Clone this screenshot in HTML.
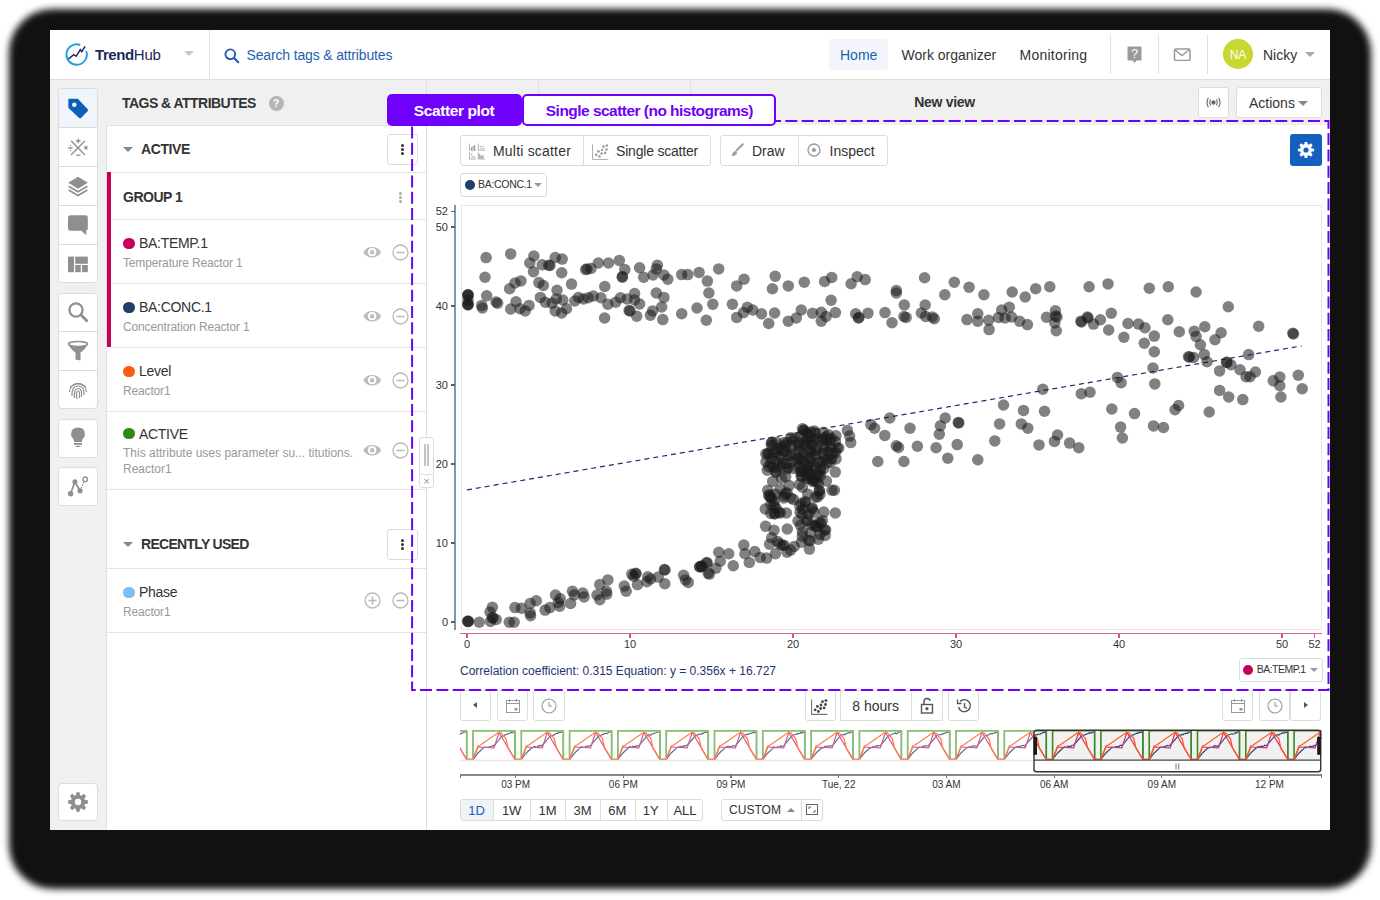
<!DOCTYPE html>
<html><head><meta charset="utf-8">
<style>
*{box-sizing:border-box;margin:0;padding:0}
html,body{width:1380px;height:900px;overflow:hidden;background:#fff;font-family:"Liberation Sans",sans-serif;color:#333}
.abs{position:absolute}
#shadow{position:absolute;left:9px;top:9px;width:1362px;height:880px;border-radius:44px;background:#111;filter:blur(3.5px)}
#win{position:absolute;left:50px;top:30px;width:1280px;height:800px;background:#fff;overflow:hidden}
.t{position:absolute;white-space:nowrap;line-height:1}
.btn{position:absolute;border:1px solid #dcdcdc;border-radius:3px;background:#fff}
.sb{position:absolute;left:8px;width:40px;border:1px solid #dcdcdc;border-radius:3px;background:#fff}
.sbi{position:absolute;left:0;width:38px;height:39px;border-bottom:1px solid #dcdcdc}
.sbi:last-child{border-bottom:none}
.row{position:absolute;left:56px;width:320px;border-bottom:1px solid #e3e3e3;background:#fff}
.dot{position:absolute;width:11px;height:11px;border-radius:50%}
.ttl{position:absolute;font-size:14.5px;color:#333;white-space:nowrap;line-height:1}
.sub{position:absolute;font-size:12px;color:#999;white-space:nowrap;line-height:1}
</style></head><body>
<div id="shadow"></div>
<div id="win">
<div class="abs" style="left:0;top:0;width:1280px;height:50px;background:#fff;border-bottom:1px solid #dedede"></div>
<svg class="abs" style="left:15px;top:13px" width="23" height="23" viewBox="0 0 23 23">
<path d="M21.2 8 A10.2 10.2 0 1 1 15.2 2" fill="none" stroke="#22a0dc" stroke-width="1.9"/>
<path d="M3.6 15.8 L8.7 11.7 L11.2 13.3 L15.3 6.7 L16.8 8.7 L20 3.4" fill="none" stroke="#1d2a5c" stroke-width="1.5" stroke-linejoin="miter"/></svg>
<div class="t" style="left:45px;top:16.5px;font-size:15px;color:#1d2858;font-weight:normal;height:15px;line-height:15px;"><b style="letter-spacing:-0.4px">Trend</b><span style="letter-spacing:-0.3px">Hub</span></div>
<div class="abs" style="left:134px;top:21px;width:0;height:0;border-left:5px solid transparent;border-right:5px solid transparent;border-top:5px solid #c8c8c8"></div>
<div class="abs" style="left:159px;top:0;width:1px;height:50px;background:#e3e3e3"></div>
<svg class="abs" style="left:174px;top:18px" width="16" height="16" viewBox="0 0 16 16">
<circle cx="6.3" cy="6.3" r="4.9" fill="none" stroke="#1f5fae" stroke-width="1.9"/>
<path d="M9.8 9.8 L14.3 14.3" stroke="#1f5fae" stroke-width="2.2" stroke-linecap="round"/></svg>
<div class="t" style="left:196.5px;top:18.0px;font-size:14px;color:#1f5fae;font-weight:normal;height:14px;line-height:14px;letter-spacing:-0.15px">Search tags &amp; attributes</div>
<div class="abs" style="left:779px;top:9px;width:59px;height:31px;background:#f2f6fb;border-radius:3px"></div>
<div class="t" style="left:790px;top:17.5px;font-size:14px;color:#1f5fae;font-weight:normal;height:14px;line-height:14px;">Home</div>
<div class="t" style="left:851.5px;top:17.5px;font-size:14px;color:#333;font-weight:normal;height:14px;line-height:14px;">Work organizer</div>
<div class="t" style="left:969.5px;top:17.5px;font-size:14px;color:#333;font-weight:normal;height:14px;line-height:14px;letter-spacing:0.25px">Monitoring</div>
<div class="abs" style="left:1060px;top:5px;width:1px;height:39px;background:#e0e0e0"></div>
<div class="abs" style="left:1108px;top:5px;width:1px;height:39px;background:#e0e0e0"></div>
<div class="abs" style="left:1157px;top:5px;width:1px;height:39px;background:#e0e0e0"></div>
<svg class="abs" style="left:1077px;top:16px" width="15" height="18" viewBox="0 0 15 18">
<path d="M1.5 0.5 H13.5 Q14.5 0.5 14.5 1.5 V13.5 Q14.5 14.5 13.5 14.5 H9.5 L7.5 17 L5.5 14.5 H1.5 Q0.5 14.5 0.5 13.5 V1.5 Q0.5 0.5 1.5 0.5Z" fill="#9a9a9a"/>
<text x="7.5" y="12" font-family="Liberation Sans" font-size="13" fill="#fff" text-anchor="middle">?</text></svg>
<svg class="abs" style="left:1123px;top:18px" width="18" height="13" viewBox="0 0 18 13">
<rect x="1.5" y="1" width="15.5" height="11.5" rx="1.5" fill="none" stroke="#9a9a9a" stroke-width="1.5"/>
<path d="M1.5 1.5 L9 7.5 L16.5 1.5" fill="none" stroke="#9a9a9a" stroke-width="1.5"/></svg>
<div class="abs" style="left:1172.8px;top:9.1px;width:30.4px;height:30.4px;border-radius:50%;background:#c9d731"></div>
<div class="t" style="left:1188px;top:18.5px;font-size:12px;color:#fff;font-weight:normal;height:12px;line-height:12px;transform:translateX(-50%);">NA</div>
<div class="t" style="left:1213px;top:17.5px;font-size:14px;color:#333;font-weight:normal;height:14px;line-height:14px;">Nicky</div>
<div class="abs" style="left:1255px;top:22px;width:0;height:0;border-left:5px solid transparent;border-right:5px solid transparent;border-top:5px solid #aaa"></div>
<div class="abs" style="left:0;top:50px;width:57px;height:750px;background:#f0f0f0"></div>
<div class="abs" style="left:8px;top:58px;width:40px;height:195.0px;border:1px solid #dcdcdc;border-radius:4px;background:#fff;overflow:hidden">
<div class="abs" style="left:0;top:38.0px;width:38px;height:1px;background:#dcdcdc"></div>
<div class="abs" style="left:0;top:77.0px;width:38px;height:1px;background:#dcdcdc"></div>
<div class="abs" style="left:0;top:116.0px;width:38px;height:1px;background:#dcdcdc"></div>
<div class="abs" style="left:0;top:155.0px;width:38px;height:1px;background:#dcdcdc"></div>
</div>
<div class="abs" style="left:9px;top:59px;width:38px;height:38px;background:#f0f5fb;border-radius:3px 3px 0 0"></div>
<div class="abs" style="left:8px;top:262.5px;width:40px;height:116.5px;border:1px solid #dcdcdc;border-radius:4px;background:#fff;overflow:hidden">
<div class="abs" style="left:0;top:37.8px;width:38px;height:1px;background:#dcdcdc"></div>
<div class="abs" style="left:0;top:76.7px;width:38px;height:1px;background:#dcdcdc"></div>
</div>
<div class="abs" style="left:8px;top:388.5px;width:40px;height:39.0px;border:1px solid #dcdcdc;border-radius:4px;background:#fff;overflow:hidden">
</div>
<div class="abs" style="left:8px;top:436.5px;width:40px;height:39.0px;border:1px solid #dcdcdc;border-radius:4px;background:#fff;overflow:hidden">
</div>
<div class="abs" style="left:8px;top:752.5px;width:40px;height:38.5px;border:1px solid #dcdcdc;border-radius:4px;background:#fff;overflow:hidden">
</div>
<svg class="abs" style="left:17px;top:67px" width="22" height="22" viewBox="0 0 22 22">
<path d="M2 2.3 H10.4 L20.2 12.6 Q20.6 13.2 20.1 13.8 L13.8 20.2 Q13 20.9 12.3 20.2 L2 10.6 Z" fill="#0b5fb9" stroke="#0b5fb9" stroke-width="1.3" stroke-linejoin="round"/>
<circle cx="7.3" cy="7.7" r="2.3" fill="#f0f5fb"/></svg>
<svg class="abs" style="left:17px;top:107px" width="22" height="22" viewBox="0 0 22 22">
<path d="M4.5 4.3 L17.5 17.5 M17.5 4.3 L4.5 17.5" stroke="#8f8f8f" stroke-width="1.35" stroke-linecap="round"/>
<path d="M9.1 4 H13.5 M11.3 1.8 V6.2 M1.2 11 H5.6 M17.4 9.3 L20.4 12.3 M20.4 9.3 L17.4 12.3 M9.1 18.2 H13.5" stroke="#8f8f8f" stroke-width="1.3"/>
<circle cx="3.4" cy="8.6" r="0.7" fill="#8f8f8f"/><circle cx="3.4" cy="13.4" r="0.7" fill="#8f8f8f"/></svg>
<svg class="abs" style="left:17px;top:146px" width="22" height="22" viewBox="0 0 22 22">
<path d="M11 0.8 L20.8 6.8 L11 12.8 L1.2 6.8 Z" fill="#8f8f8f"/>
<path d="M1.6 10.2 L11 15.8 L20.4 10.2 M1.6 14 L11 19.6 L20.4 14" fill="none" stroke="#8f8f8f" stroke-width="1.7"/></svg>
<svg class="abs" style="left:17px;top:185px" width="22" height="22" viewBox="0 0 22 22">
<path d="M1 2.6 Q1 0.2 3.4 0.2 H18.4 Q20.8 0.2 20.8 2.6 V13.4 Q20.8 15.8 18.6 15.8 H19.3 V20.2 L14.3 15.8 H3.4 Q1 15.8 1 13.4 Z" fill="#8f8f8f"/></svg>
<svg class="abs" style="left:17px;top:224px" width="22" height="22" viewBox="0 0 22 22">
<rect x="1" y="2.6" width="6" height="15.6" fill="#8f8f8f"/><rect x="8.2" y="2.6" width="12.6" height="7.2" fill="#8f8f8f"/>
<rect x="8.2" y="11" width="5.6" height="7.2" fill="#8f8f8f"/><rect x="15" y="11" width="5.8" height="7.2" fill="#8f8f8f"/></svg>
<svg class="abs" style="left:17px;top:271px" width="22" height="22" viewBox="0 0 22 22">
<circle cx="9" cy="9" r="6.6" fill="none" stroke="#8f8f8f" stroke-width="2.2"/>
<path d="M13.8 13.8 L19.8 19.8" stroke="#8f8f8f" stroke-width="2.8" stroke-linecap="round"/></svg>
<svg class="abs" style="left:17px;top:310px" width="22" height="22" viewBox="0 0 22 22">
<ellipse cx="11" cy="4" rx="9.5" ry="2.5" fill="none" stroke="#8f8f8f" stroke-width="1.6"/>
<path d="M1.5 4.5 Q4 10 8.5 12.5 V19.5 L13.5 20.5 V12.5 Q18 10 20.5 4.5 Q11 9 1.5 4.5Z" fill="#8f8f8f"/></svg>
<svg class="abs" style="left:17px;top:349px" width="22" height="22" viewBox="0 0 22 22" fill="none" stroke="#8f8f8f" stroke-width="1.2">
<path d="M3.5 8 Q11 1 18.5 8"/><path d="M2.5 13 Q3 5 11 4.5 Q19 5 19.5 13"/>
<path d="M5 17 Q4.5 7 11 7 Q17 7 17 14 V16"/><path d="M7.5 19 Q6.5 9.5 11 9.5 Q14.5 9.5 14.5 14 V18"/>
<path d="M10 20 Q8.5 12 11 12 Q12.5 12 12.5 15 V19"/></svg>
<svg class="abs" style="left:17px;top:396px" width="22" height="22" viewBox="0 0 22 22">
<path d="M11 1.5 Q18 1.5 18 8.5 Q18 11.5 15 14 V16 H7 V14 Q4 11.5 4 8.5 Q4 1.5 11 1.5Z" fill="#8f8f8f"/>
<rect x="7" y="17" width="8" height="1.8" fill="#8f8f8f"/><path d="M8 19.8 H14 L12.5 21 H9.5Z" fill="#8f8f8f"/></svg>
<svg class="abs" style="left:17px;top:445px" width="22" height="22" viewBox="0 0 22 22">
<path d="M3.6 18.8 L7.9 6.8 L13 15.8" fill="none" stroke="#8f8f8f" stroke-width="1.8"/>
<path d="M13 15.8 L17.5 6" stroke="#8f8f8f" stroke-width="1.3" stroke-dasharray="1.4 1.4"/>
<circle cx="3.6" cy="18.8" r="2.7" fill="#8f8f8f"/><circle cx="7.9" cy="6.8" r="2.5" fill="#8f8f8f"/><circle cx="13" cy="15.8" r="2.6" fill="#8f8f8f"/>
<circle cx="18.2" cy="4.3" r="2.3" fill="#fff" stroke="#8f8f8f" stroke-width="1.3"/></svg>
<svg class="abs" style="left:17px;top:761px" width="22" height="22" viewBox="0 0 22 22"><path d="M17.93 9.03 L20.87 9.37 L20.87 12.63 L17.93 12.97 L17.29 14.51 L19.13 16.83 L16.83 19.13 L14.51 17.29 L12.97 17.93 L12.63 20.87 L9.37 20.87 L9.03 17.93 L7.49 17.29 L5.17 19.13 L2.87 16.83 L4.71 14.51 L4.07 12.97 L1.13 12.63 L1.13 9.37 L4.07 9.03 L4.71 7.49 L2.87 5.17 L5.17 2.87 L7.49 4.71 L9.03 4.07 L9.37 1.13 L12.63 1.13 L12.97 4.07 L14.51 4.71 L16.83 2.87 L19.13 5.17 L17.29 7.49Z" fill="#8f8f8f"/><circle cx="11" cy="11" r="3.2" fill="#fff"/></svg>
<div class="abs" style="left:57px;top:50px;width:1223px;height:45px;background:#f0f0f0"></div>
<div class="abs" style="left:376px;top:50px;width:1px;height:750px;background:#dedede"></div>
<div class="abs" style="left:488px;top:50px;width:1px;height:45px;background:#e2e2e2"></div>
<div class="abs" style="left:639.5px;top:50px;width:1px;height:45px;background:#e2e2e2"></div>
<div class="t" style="left:72px;top:65.5px;font-size:14px;color:#333;font-weight:bold;height:14px;line-height:14px;letter-spacing:-0.53px">TAGS &amp; ATTRIBUTES</div>
<div class="abs" style="left:218.5px;top:65.5px;width:15px;height:15px;border-radius:50%;background:#b5b5b5"></div>
<div class="t" style="left:226px;top:67.5px;font-size:11px;color:#fff;font-weight:bold;height:11px;line-height:11px;transform:translateX(-50%);">?</div>
<div class="t" style="left:894.5px;top:65.0px;font-size:14px;color:#333;font-weight:bold;height:14px;line-height:14px;transform:translateX(-50%);letter-spacing:-0.3px">New view</div>
<div class="btn" style="left:1148px;top:57px;width:31px;height:31px"></div>
<svg class="abs" style="left:1155px;top:66px" width="17" height="13" viewBox="0 0 17 13" fill="none" stroke="#666" stroke-width="1.1">
<circle cx="8.5" cy="6.5" r="1.6" fill="#666"/><path d="M5.6 3.6 Q4 6.5 5.6 9.4 M11.4 3.6 Q13 6.5 11.4 9.4 M3.4 1.8 Q0.6 6.5 3.4 11.2 M13.6 1.8 Q16.4 6.5 13.6 11.2"/></svg>
<div class="btn" style="left:1186px;top:57px;width:86px;height:31px"></div>
<div class="t" style="left:1199px;top:66.0px;font-size:14px;color:#333;font-weight:normal;height:14px;line-height:14px;">Actions</div>
<div class="abs" style="left:1248px;top:71px;width:0;height:0;border-left:5px solid transparent;border-right:5px solid transparent;border-top:5px solid #888"></div>
<div class="abs" style="left:57px;top:95px;width:319px;height:705px;background:#fff;border-top:1px solid #e3e3e3"></div>
<div class="abs" style="left:56px;top:95px;width:1px;height:705px;background:#e0e0e0"></div>
<div class="abs" style="left:72.5px;top:117.0px;width:0;height:0;border-left:5px solid transparent;border-right:5px solid transparent;border-top:5px solid #888"></div>
<div class="t" style="left:91px;top:112.0px;font-size:14px;color:#333;font-weight:bold;height:14px;line-height:14px;letter-spacing:-0.4px">ACTIVE</div>
<div class="btn" style="left:336.5px;top:103.5px;width:31px;height:31px"></div>
<div class="abs" style="left:350.5px;top:113.5px;width:3px;height:3px;border-radius:50%;background:#333"></div>
<div class="abs" style="left:350.5px;top:117.5px;width:3px;height:3px;border-radius:50%;background:#333"></div>
<div class="abs" style="left:350.5px;top:121.5px;width:3px;height:3px;border-radius:50%;background:#333"></div>
<div class="abs" style="left:57px;top:142px;width:319px;height:1px;background:#e3e3e3"></div>
<div class="abs" style="left:57px;top:142px;width:4px;height:175px;background:#c8005a"></div>
<div class="t" style="left:73px;top:160.0px;font-size:14px;color:#333;font-weight:bold;height:14px;line-height:14px;letter-spacing:-0.5px">GROUP 1</div>
<div class="abs" style="left:348.5px;top:161.5px;width:3px;height:3px;border-radius:50%;background:#aaa"></div>
<div class="abs" style="left:348.5px;top:165.5px;width:3px;height:3px;border-radius:50%;background:#aaa"></div>
<div class="abs" style="left:348.5px;top:169.5px;width:3px;height:3px;border-radius:50%;background:#aaa"></div>
<div class="abs" style="left:61px;top:189px;width:315px;height:1px;background:#e3e3e3"></div>
<div class="abs" style="left:73px;top:207.5px;width:11.6px;height:11.6px;border-radius:50%;background:#c8005a"></div>
<div class="t" style="left:89px;top:206.3px;font-size:14px;color:#333;font-weight:normal;height:14px;line-height:14px;letter-spacing:-0.3px">BA:TEMP.1</div>
<div class="t" style="left:73px;top:226.5px;font-size:12px;color:#999;font-weight:normal;height:12px;line-height:12px;letter-spacing:-0.15px">Temperature Reactor 1</div>
<svg class="abs" style="left:312.65000000000003px;top:216.0px" width="18.3" height="12.4" viewBox="0 0 18.3 12.4">
<path d="M0.2 6.2 C3.5 -0.8 14.8 -0.8 18.1 6.2 C14.8 13.2 3.5 13.2 0.2 6.2Z" fill="#bbbcbe"/><circle cx="9.15" cy="6.2" r="4.1" fill="#fff"/><circle cx="9.15" cy="6.2" r="2.2" fill="#bbbcbe"/></svg>
<svg class="abs" style="left:341.5px;top:213.7px" width="17" height="17" viewBox="0 0 17 17">
<circle cx="8.5" cy="8.5" r="7.5" fill="none" stroke="#b8b8b8" stroke-width="1.3"/><path d="M4.5 8.5 H12.5" stroke="#b8b8b8" stroke-width="1.5"/></svg>
<div class="abs" style="left:61px;top:253px;width:315px;height:1px;background:#e3e3e3"></div>
<div class="abs" style="left:73px;top:271.5px;width:11.6px;height:11.6px;border-radius:50%;background:#1f3f66"></div>
<div class="t" style="left:89px;top:270.3px;font-size:14px;color:#333;font-weight:normal;height:14px;line-height:14px;letter-spacing:-0.3px">BA:CONC.1</div>
<div class="t" style="left:73px;top:290.5px;font-size:12px;color:#999;font-weight:normal;height:12px;line-height:12px;letter-spacing:-0.15px">Concentration Reactor 1</div>
<svg class="abs" style="left:312.65000000000003px;top:280.0px" width="18.3" height="12.4" viewBox="0 0 18.3 12.4">
<path d="M0.2 6.2 C3.5 -0.8 14.8 -0.8 18.1 6.2 C14.8 13.2 3.5 13.2 0.2 6.2Z" fill="#bbbcbe"/><circle cx="9.15" cy="6.2" r="4.1" fill="#fff"/><circle cx="9.15" cy="6.2" r="2.2" fill="#bbbcbe"/></svg>
<svg class="abs" style="left:341.5px;top:277.7px" width="17" height="17" viewBox="0 0 17 17">
<circle cx="8.5" cy="8.5" r="7.5" fill="none" stroke="#b8b8b8" stroke-width="1.3"/><path d="M4.5 8.5 H12.5" stroke="#b8b8b8" stroke-width="1.5"/></svg>
<div class="abs" style="left:61px;top:317px;width:315px;height:1px;background:#e3e3e3"></div>
<div class="abs" style="left:73px;top:335.5px;width:11.6px;height:11.6px;border-radius:50%;background:#ff5a14"></div>
<div class="t" style="left:89px;top:334.3px;font-size:14px;color:#333;font-weight:normal;height:14px;line-height:14px;letter-spacing:-0.3px">Level</div>
<div class="t" style="left:73px;top:354.5px;font-size:12px;color:#999;font-weight:normal;height:12px;line-height:12px;letter-spacing:-0.15px">Reactor1</div>
<svg class="abs" style="left:312.65000000000003px;top:344.0px" width="18.3" height="12.4" viewBox="0 0 18.3 12.4">
<path d="M0.2 6.2 C3.5 -0.8 14.8 -0.8 18.1 6.2 C14.8 13.2 3.5 13.2 0.2 6.2Z" fill="#bbbcbe"/><circle cx="9.15" cy="6.2" r="4.1" fill="#fff"/><circle cx="9.15" cy="6.2" r="2.2" fill="#bbbcbe"/></svg>
<svg class="abs" style="left:341.5px;top:341.7px" width="17" height="17" viewBox="0 0 17 17">
<circle cx="8.5" cy="8.5" r="7.5" fill="none" stroke="#b8b8b8" stroke-width="1.3"/><path d="M4.5 8.5 H12.5" stroke="#b8b8b8" stroke-width="1.5"/></svg>
<div class="abs" style="left:57px;top:381px;width:319px;height:1px;background:#e3e3e3"></div>
<div class="abs" style="left:73px;top:397.7px;width:11.6px;height:11.6px;border-radius:50%;background:#2f8a14"></div>
<div class="t" style="left:89px;top:396.5px;font-size:14px;color:#333;font-weight:normal;height:14px;line-height:14px;letter-spacing:-0.3px">ACTIVE</div>
<div class="t" style="left:73px;top:416.7px;font-size:12px;color:#999;font-weight:normal;height:12px;line-height:12px;">This attribute uses parameter su... titutions.</div>
<div class="t" style="left:73px;top:432.7px;font-size:12px;color:#999;font-weight:normal;height:12px;line-height:12px;">Reactor1</div>
<svg class="abs" style="left:312.65000000000003px;top:413.8px" width="18.3" height="12.4" viewBox="0 0 18.3 12.4">
<path d="M0.2 6.2 C3.5 -0.8 14.8 -0.8 18.1 6.2 C14.8 13.2 3.5 13.2 0.2 6.2Z" fill="#bbbcbe"/><circle cx="9.15" cy="6.2" r="4.1" fill="#fff"/><circle cx="9.15" cy="6.2" r="2.2" fill="#bbbcbe"/></svg>
<svg class="abs" style="left:341.5px;top:411.5px" width="17" height="17" viewBox="0 0 17 17">
<circle cx="8.5" cy="8.5" r="7.5" fill="none" stroke="#b8b8b8" stroke-width="1.3"/><path d="M4.5 8.5 H12.5" stroke="#b8b8b8" stroke-width="1.5"/></svg>
<div class="abs" style="left:57px;top:458.5px;width:319px;height:1px;background:#e3e3e3"></div>
<div class="abs" style="left:73px;top:512.0px;width:0;height:0;border-left:5px solid transparent;border-right:5px solid transparent;border-top:5px solid #888"></div>
<div class="t" style="left:91px;top:507.0px;font-size:14px;color:#333;font-weight:bold;height:14px;line-height:14px;letter-spacing:-0.7px">RECENTLY USED</div>
<div class="btn" style="left:336.5px;top:499.0px;width:31px;height:31px"></div>
<div class="abs" style="left:350.5px;top:509.0px;width:3px;height:3px;border-radius:50%;background:#333"></div>
<div class="abs" style="left:350.5px;top:513.0px;width:3px;height:3px;border-radius:50%;background:#333"></div>
<div class="abs" style="left:350.5px;top:517.0px;width:3px;height:3px;border-radius:50%;background:#333"></div>
<div class="abs" style="left:57px;top:538px;width:319px;height:1px;background:#e3e3e3"></div>
<div class="abs" style="left:73px;top:556.5px;width:11.6px;height:11.6px;border-radius:50%;background:#7bbdf5"></div>
<div class="t" style="left:89px;top:555.3px;font-size:14px;color:#333;font-weight:normal;height:14px;line-height:14px;letter-spacing:-0.3px">Phase</div>
<div class="t" style="left:73px;top:575.5px;font-size:12px;color:#999;font-weight:normal;height:12px;line-height:12px;letter-spacing:-0.15px">Reactor1</div>
<svg class="abs" style="left:313.5px;top:561.9px" width="17" height="17" viewBox="0 0 17 17">
<circle cx="8.5" cy="8.5" r="7.5" fill="none" stroke="#b8b8b8" stroke-width="1.3"/><path d="M4.5 8.5 H12.5" stroke="#b8b8b8" stroke-width="1.5"/><path d="M8.5 4.5 V12.5" stroke="#b8b8b8" stroke-width="1.5"/></svg>
<svg class="abs" style="left:341.5px;top:561.9px" width="17" height="17" viewBox="0 0 17 17">
<circle cx="8.5" cy="8.5" r="7.5" fill="none" stroke="#b8b8b8" stroke-width="1.3"/><path d="M4.5 8.5 H12.5" stroke="#b8b8b8" stroke-width="1.5"/></svg>
<div class="abs" style="left:57px;top:602px;width:319px;height:1px;background:#e3e3e3"></div>
<div class="btn" style="left:368.6px;top:407.3px;width:15.4px;height:51.2px;border-radius:3px"></div><div class="abs" style="left:369px;top:443.5px;width:15px;height:1px;background:#e2e2e2"></div>
<div class="abs" style="left:374.3px;top:414px;width:1.5px;height:22px;background:#c4c4c4"></div><div class="abs" style="left:377.4px;top:414px;width:1.5px;height:22px;background:#c4c4c4"></div>
<div class="t" style="left:376.5px;top:446.0px;font-size:11px;color:#999;font-weight:normal;height:11px;line-height:11px;transform:translateX(-50%);">×</div>
<div class="btn" style="left:410px;top:104.5px;width:251px;height:31px"></div>
<div class="abs" style="left:533px;top:105px;width:1px;height:30px;background:#dcdcdc"></div>
<div class="btn" style="left:670px;top:104.5px;width:168px;height:31px"></div>
<div class="abs" style="left:748px;top:105px;width:1px;height:30px;background:#dcdcdc"></div>
<svg class="abs" style="left:419px;top:113px" width="16.5" height="16.5" viewBox="0 0 16 16" fill="none">
<path d="M0.5 0.5 V7 H7 M9 0.5 V7 H15.5 M0.5 9 V15.5 H7 M9 9 V15.5 H15.5" stroke="#aaa" stroke-width="0.9"/>
<path d="M2.5 6.5 V4 M4 6.5 V3 M5.5 6.5 V2 M10.5 15 V10.5 M12 15 V12.5 M13.5 15 V11.5" stroke="#999" stroke-width="1.1"/>
<g fill="#999"><rect x="10.5" y="3" width="1.2" height="1.2"/><rect x="13" y="2.5" width="1.2" height="1.2"/><rect x="11.5" y="4.8" width="1.2" height="1.2"/><rect x="13.8" y="4.6" width="1.2" height="1.2"/>
<rect x="2" y="10.5" width="1.2" height="1.2"/><rect x="2.5" y="13" width="1.2" height="1.2"/><rect x="4.5" y="12.8" width="1.2" height="1.2"/></g></svg>
<div class="t" style="left:443px;top:113.5px;font-size:14px;color:#333;font-weight:normal;height:14px;line-height:14px;letter-spacing:0.2px">Multi scatter</div>
<svg class="abs" style="left:541.5px;top:112.5px" width="18" height="18" viewBox="0 0 18 18">
<path d="M0.6 1.2 V16.4 H16.4" stroke="#aaa" stroke-width="1" fill="none"/>
<g fill="#a0a0a0"><circle cx="4.2" cy="11.8" r="1.35"/><circle cx="7.4" cy="13.5" r="1.35"/><circle cx="6.4" cy="8.4" r="1.35"/><circle cx="9.6" cy="10.5" r="1.35"/><circle cx="10" cy="7" r="1.35"/><circle cx="13.1" cy="9.9" r="1.35"/><circle cx="11.5" cy="3.7" r="1.35"/><circle cx="14.5" cy="6.5" r="1.35"/><circle cx="14.9" cy="2.6" r="1.35"/></g></svg>
<div class="t" style="left:566px;top:113.5px;font-size:14px;color:#333;font-weight:normal;height:14px;line-height:14px;letter-spacing:-0.2px">Single scatter</div>
<svg class="abs" style="left:680px;top:113px" width="14" height="14" viewBox="0 0 14 14">
<path d="M12.8 1.2 L6.5 7.5" stroke="#a0a0a0" stroke-width="2" stroke-linecap="round"/><path d="M5.8 8 Q3.2 8 2.5 10.5 Q2.2 12 1 12.8 Q4.8 13.3 6.3 11.5 Q7.3 10 6.8 9Z" fill="#a0a0a0"/></svg>
<div class="t" style="left:702px;top:113.5px;font-size:14px;color:#333;font-weight:normal;height:14px;line-height:14px;">Draw</div>
<svg class="abs" style="left:757px;top:113px" width="14" height="14" viewBox="0 0 14 14">
<circle cx="7" cy="7" r="6" fill="none" stroke="#9a9a9a" stroke-width="1.3"/><circle cx="7" cy="7" r="2" fill="#9a9a9a"/></svg>
<div class="t" style="left:779.5px;top:113.5px;font-size:14px;color:#333;font-weight:normal;height:14px;line-height:14px;">Inspect</div>
<div class="abs" style="left:1240px;top:104px;width:32px;height:32px;background:#1560bd;border-radius:3px"></div>
<svg class="abs" style="left:1247px;top:111px" width="18" height="18" viewBox="0 0 18 18"><path d="M14.68 7.39 L17.09 7.67 L17.09 10.33 L14.68 10.61 L14.15 11.87 L15.66 13.78 L13.78 15.66 L11.87 14.15 L10.61 14.68 L10.33 17.09 L7.67 17.09 L7.39 14.68 L6.13 14.15 L4.22 15.66 L2.34 13.78 L3.85 11.87 L3.32 10.61 L0.91 10.33 L0.91 7.67 L3.32 7.39 L3.85 6.13 L2.34 4.22 L4.22 2.34 L6.13 3.85 L7.39 3.32 L7.67 0.91 L10.33 0.91 L10.61 3.32 L11.87 3.85 L13.78 2.34 L15.66 4.22 L14.15 6.13Z" fill="#fff"/><circle cx="9" cy="9" r="2.6" fill="#1560bd"/></svg>
<div class="btn" style="left:410px;top:142.5px;width:87px;height:24px"></div>
<div class="abs" style="left:414.5px;top:149.5px;width:10px;height:10px;border-radius:50%;background:#1f3f66"></div>
<div class="t" style="left:428px;top:149.2px;font-size:10.5px;color:#333;font-weight:normal;height:10.5px;line-height:10.5px;letter-spacing:-0.3px">BA:CONC.1</div>
<div class="abs" style="left:484px;top:152.5px;width:0;height:0;border-left:4px solid transparent;border-right:4px solid transparent;border-top:4px solid #999"></div>
<div class="abs" style="left:410.5px;top:175px;width:861.5px;height:425px;border:1px solid #e6e6e6"></div>
<div class="abs" style="left:403.8px;top:175px;width:2px;height:424.5px;background:#7f95b0"></div>
<div class="abs" style="left:410px;top:602.8px;width:862px;height:1.7px;background:#e5649e"></div>
<div class="abs" style="left:401px;top:591.4px;width:3.5px;height:1.3px;background:#4a5f80"></div>
<div class="t" style="left:398px;top:586.5px;font-size:11px;color:#333;font-weight:normal;height:11px;line-height:11px;transform:translateX(-100%);">0</div>
<div class="abs" style="left:401px;top:512.4px;width:3.5px;height:1.3px;background:#4a5f80"></div>
<div class="t" style="left:398px;top:507.5px;font-size:11px;color:#333;font-weight:normal;height:11px;line-height:11px;transform:translateX(-100%);">10</div>
<div class="abs" style="left:401px;top:433.4px;width:3.5px;height:1.3px;background:#4a5f80"></div>
<div class="t" style="left:398px;top:428.5px;font-size:11px;color:#333;font-weight:normal;height:11px;line-height:11px;transform:translateX(-100%);">20</div>
<div class="abs" style="left:401px;top:354.4px;width:3.5px;height:1.3px;background:#4a5f80"></div>
<div class="t" style="left:398px;top:349.5px;font-size:11px;color:#333;font-weight:normal;height:11px;line-height:11px;transform:translateX(-100%);">30</div>
<div class="abs" style="left:401px;top:275.4px;width:3.5px;height:1.3px;background:#4a5f80"></div>
<div class="t" style="left:398px;top:270.5px;font-size:11px;color:#333;font-weight:normal;height:11px;line-height:11px;transform:translateX(-100%);">40</div>
<div class="abs" style="left:401px;top:196.4px;width:3.5px;height:1.3px;background:#4a5f80"></div>
<div class="t" style="left:398px;top:191.5px;font-size:11px;color:#333;font-weight:normal;height:11px;line-height:11px;transform:translateX(-100%);">50</div>
<div class="abs" style="left:401px;top:180.6px;width:3.5px;height:1.3px;background:#4a5f80"></div>
<div class="t" style="left:398px;top:175.7px;font-size:11px;color:#333;font-weight:normal;height:11px;line-height:11px;transform:translateX(-100%);">52</div>
<div class="abs" style="left:416.4px;top:604px;width:1.3px;height:3.5px;background:#e0508e"></div>
<div class="t" style="left:417.0px;top:609.3px;font-size:11px;color:#333;font-weight:normal;height:11px;line-height:11px;transform:translateX(-50%);">0</div>
<div class="abs" style="left:579.4px;top:604px;width:1.3px;height:3.5px;background:#e0508e"></div>
<div class="t" style="left:580.0px;top:609.3px;font-size:11px;color:#333;font-weight:normal;height:11px;line-height:11px;transform:translateX(-50%);">10</div>
<div class="abs" style="left:742.4px;top:604px;width:1.3px;height:3.5px;background:#e0508e"></div>
<div class="t" style="left:743.0px;top:609.3px;font-size:11px;color:#333;font-weight:normal;height:11px;line-height:11px;transform:translateX(-50%);">20</div>
<div class="abs" style="left:905.4px;top:604px;width:1.3px;height:3.5px;background:#e0508e"></div>
<div class="t" style="left:906.0px;top:609.3px;font-size:11px;color:#333;font-weight:normal;height:11px;line-height:11px;transform:translateX(-50%);">30</div>
<div class="abs" style="left:1068.4px;top:604px;width:1.3px;height:3.5px;background:#e0508e"></div>
<div class="t" style="left:1069.0px;top:609.3px;font-size:11px;color:#333;font-weight:normal;height:11px;line-height:11px;transform:translateX(-50%);">40</div>
<div class="abs" style="left:1231.4px;top:604px;width:1.3px;height:3.5px;background:#e0508e"></div>
<div class="t" style="left:1232.0px;top:609.3px;font-size:11px;color:#333;font-weight:normal;height:11px;line-height:11px;transform:translateX(-50%);">50</div>
<div class="abs" style="left:1264.0px;top:604px;width:1.3px;height:3.5px;background:#e0508e"></div>
<div class="t" style="left:1264.6px;top:609.3px;font-size:11px;color:#333;font-weight:normal;height:11px;line-height:11px;transform:translateX(-50%);">52</div>
<div class="t" style="left:410px;top:634.5px;font-size:12px;color:#1d3571;font-weight:normal;height:12px;line-height:12px;">Correlation coefficient: 0.315 Equation: y = 0.356x + 16.727</div>
<div class="btn" style="left:1188.5px;top:627.5px;width:84px;height:24px"></div>
<div class="abs" style="left:1192.8px;top:634.5px;width:10.3px;height:10.3px;border-radius:50%;background:#c8005a"></div>
<div class="t" style="left:1206.7px;top:634.2px;font-size:10.5px;color:#333;font-weight:normal;height:10.5px;line-height:10.5px;letter-spacing:-0.5px">BA:TEMP.1</div>
<div class="abs" style="left:1259.5px;top:637.5px;width:0;height:0;border-left:4px solid transparent;border-right:4px solid transparent;border-top:4px solid #999"></div>
<svg class="abs" style="left:0;top:0" width="1280" height="800" viewBox="0 0 1280 800"><path d="M417.0 459.9 L1251.6 315.9" stroke="#1b2f6e" stroke-width="1.2" stroke-dasharray="5 4"/><g fill="#1a1a1a" fill-opacity="0.55"><circle cx="418.0" cy="265.0" r="5.75"/><circle cx="418.0" cy="265.5" r="5.75"/><circle cx="418.0" cy="264.5" r="5.75"/><circle cx="418.0" cy="274.5" r="5.75"/><circle cx="418.0" cy="275.0" r="5.75"/><circle cx="418.0" cy="274.0" r="5.75"/><circle cx="418.0" cy="270.0" r="5.75"/><circle cx="436.1" cy="227.6" r="5.75"/><circle cx="435.0" cy="247.2" r="5.75"/><circle cx="436.7" cy="265.7" r="5.75"/><circle cx="431.7" cy="275.4" r="5.75"/><circle cx="432.4" cy="278.0" r="5.75"/><circle cx="446.0" cy="272.0" r="5.75"/><circle cx="447.6" cy="273.3" r="5.75"/><circle cx="460.7" cy="223.9" r="5.75"/><circle cx="459.6" cy="258.7" r="5.75"/><circle cx="465.0" cy="253.0" r="5.75"/><circle cx="470.9" cy="250.9" r="5.75"/><circle cx="466.0" cy="271.7" r="5.75"/><circle cx="460.7" cy="279.0" r="5.75"/><circle cx="470.0" cy="278.7" r="5.75"/><circle cx="475.2" cy="280.9" r="5.75"/><circle cx="479.0" cy="275.4" r="5.75"/><circle cx="483.9" cy="226.0" r="5.75"/><circle cx="479.8" cy="233.0" r="5.75"/><circle cx="483.5" cy="241.7" r="5.75"/><circle cx="488.9" cy="252.6" r="5.75"/><circle cx="493.3" cy="255.4" r="5.75"/><circle cx="492.2" cy="234.8" r="5.75"/><circle cx="498.7" cy="235.2" r="5.75"/><circle cx="500.0" cy="235.5" r="5.75"/><circle cx="505.2" cy="227.6" r="5.75"/><circle cx="512.2" cy="229.1" r="5.75"/><circle cx="511.7" cy="242.8" r="5.75"/><circle cx="521.5" cy="254.1" r="5.75"/><circle cx="507.0" cy="260.2" r="5.75"/><circle cx="490.4" cy="267.4" r="5.75"/><circle cx="495.4" cy="272.2" r="5.75"/><circle cx="502.0" cy="273.3" r="5.75"/><circle cx="506.3" cy="268.9" r="5.75"/><circle cx="512.8" cy="270.0" r="5.75"/><circle cx="505.2" cy="280.9" r="5.75"/><circle cx="511.7" cy="283.0" r="5.75"/><circle cx="516.5" cy="278.7" r="5.75"/><circle cx="524.8" cy="271.0" r="5.75"/><circle cx="528.5" cy="267.4" r="5.75"/><circle cx="533.5" cy="269.0" r="5.75"/><circle cx="538.3" cy="267.8" r="5.75"/><circle cx="543.3" cy="266.0" r="5.75"/><circle cx="535.7" cy="239.6" r="5.75"/><circle cx="537.0" cy="239.0" r="5.75"/><circle cx="541.0" cy="238.5" r="5.75"/><circle cx="548.3" cy="233.0" r="5.75"/><circle cx="558.5" cy="233.0" r="5.75"/><circle cx="569.3" cy="230.4" r="5.75"/><circle cx="574.8" cy="239.6" r="5.75"/><circle cx="572.2" cy="247.2" r="5.75"/><circle cx="572.5" cy="246.5" r="5.75"/><circle cx="554.8" cy="256.5" r="5.75"/><circle cx="550.9" cy="267.8" r="5.75"/><circle cx="557.8" cy="274.3" r="5.75"/><circle cx="565.7" cy="272.2" r="5.75"/><circle cx="570.4" cy="267.8" r="5.75"/><circle cx="577.0" cy="269.0" r="5.75"/><circle cx="584.6" cy="263.5" r="5.75"/><circle cx="584.6" cy="270.0" r="5.75"/><circle cx="589.6" cy="274.0" r="5.75"/><circle cx="579.1" cy="280.4" r="5.75"/><circle cx="580.0" cy="281.0" r="5.75"/><circle cx="586.7" cy="286.3" r="5.75"/><circle cx="554.6" cy="288.0" r="5.75"/><circle cx="589.6" cy="237.8" r="5.75"/><circle cx="593.7" cy="247.2" r="5.75"/><circle cx="603.0" cy="245.0" r="5.75"/><circle cx="607.4" cy="235.2" r="5.75"/><circle cx="606.3" cy="239.0" r="5.75"/><circle cx="613.9" cy="245.0" r="5.75"/><circle cx="617.8" cy="249.3" r="5.75"/><circle cx="606.3" cy="263.0" r="5.75"/><circle cx="613.9" cy="267.4" r="5.75"/><circle cx="611.7" cy="277.0" r="5.75"/><circle cx="602.6" cy="280.9" r="5.75"/><circle cx="600.4" cy="285.2" r="5.75"/><circle cx="612.8" cy="289.6" r="5.75"/><circle cx="631.7" cy="244.6" r="5.75"/><circle cx="637.8" cy="244.6" r="5.75"/><circle cx="649.1" cy="242.4" r="5.75"/><circle cx="657.4" cy="251.1" r="5.75"/><circle cx="658.9" cy="263.0" r="5.75"/><circle cx="662.8" cy="274.3" r="5.75"/><circle cx="647.0" cy="278.0" r="5.75"/><circle cx="631.7" cy="283.7" r="5.75"/><circle cx="656.3" cy="290.2" r="5.75"/><circle cx="668.7" cy="238.9" r="5.75"/><circle cx="682.4" cy="274.3" r="5.75"/><circle cx="686.7" cy="255.9" r="5.75"/><circle cx="686.7" cy="287.4" r="5.75"/><circle cx="694.1" cy="249.3" r="5.75"/><circle cx="693.5" cy="282.6" r="5.75"/><circle cx="697.4" cy="277.2" r="5.75"/><circle cx="702.8" cy="280.0" r="5.75"/><circle cx="711.5" cy="283.7" r="5.75"/><circle cx="718.7" cy="293.5" r="5.75"/><circle cx="724.6" cy="283.0" r="5.75"/><circle cx="725.2" cy="246.3" r="5.75"/><circle cx="722.4" cy="258.7" r="5.75"/><circle cx="738.3" cy="255.9" r="5.75"/><circle cx="738.3" cy="291.3" r="5.75"/><circle cx="746.3" cy="288.0" r="5.75"/><circle cx="751.3" cy="280.0" r="5.75"/><circle cx="754.3" cy="252.2" r="5.75"/><circle cx="762.6" cy="283.3" r="5.75"/><circle cx="771.3" cy="282.2" r="5.75"/><circle cx="771.3" cy="291.3" r="5.75"/><circle cx="776.1" cy="286.5" r="5.75"/><circle cx="785.4" cy="282.6" r="5.75"/><circle cx="774.6" cy="251.5" r="5.75"/><circle cx="781.7" cy="247.4" r="5.75"/><circle cx="781.1" cy="270.2" r="5.75"/><circle cx="801.1" cy="253.7" r="5.75"/><circle cx="807.2" cy="246.7" r="5.75"/><circle cx="815.2" cy="249.6" r="5.75"/><circle cx="805.7" cy="283.7" r="5.75"/><circle cx="808.3" cy="288.0" r="5.75"/><circle cx="809.0" cy="287.5" r="5.75"/><circle cx="818.0" cy="283.3" r="5.75"/><circle cx="846.3" cy="260.4" r="5.75"/><circle cx="846.3" cy="263.0" r="5.75"/><circle cx="835.0" cy="282.6" r="5.75"/><circle cx="842.0" cy="292.8" r="5.75"/><circle cx="854.3" cy="275.0" r="5.75"/><circle cx="853.9" cy="286.5" r="5.75"/><circle cx="856.1" cy="287.4" r="5.75"/><circle cx="874.6" cy="247.8" r="5.75"/><circle cx="875.2" cy="275.0" r="5.75"/><circle cx="871.3" cy="283.0" r="5.75"/><circle cx="875.7" cy="286.5" r="5.75"/><circle cx="882.2" cy="287.0" r="5.75"/><circle cx="884.3" cy="288.7" r="5.75"/><circle cx="894.8" cy="264.8" r="5.75"/><circle cx="904.3" cy="252.2" r="5.75"/><circle cx="919.1" cy="257.2" r="5.75"/><circle cx="933.9" cy="264.8" r="5.75"/><circle cx="917.0" cy="289.6" r="5.75"/><circle cx="927.8" cy="283.7" r="5.75"/><circle cx="927.8" cy="291.3" r="5.75"/><circle cx="938.7" cy="290.2" r="5.75"/><circle cx="939.1" cy="299.6" r="5.75"/><circle cx="948.5" cy="287.4" r="5.75"/><circle cx="951.7" cy="280.0" r="5.75"/><circle cx="955.0" cy="288.0" r="5.75"/><circle cx="959.3" cy="277.2" r="5.75"/><circle cx="961.5" cy="287.0" r="5.75"/><circle cx="962.2" cy="262.0" r="5.75"/><circle cx="969.6" cy="291.3" r="5.75"/><circle cx="975.2" cy="267.0" r="5.75"/><circle cx="977.4" cy="294.6" r="5.75"/><circle cx="985.7" cy="258.7" r="5.75"/><circle cx="999.8" cy="256.7" r="5.75"/><circle cx="1039.1" cy="256.7" r="5.75"/><circle cx="1058.0" cy="253.9" r="5.75"/><circle cx="1099.3" cy="258.3" r="5.75"/><circle cx="1118.3" cy="256.7" r="5.75"/><circle cx="1146.1" cy="262.0" r="5.75"/><circle cx="1178.3" cy="276.7" r="5.75"/><circle cx="1208.7" cy="296.3" r="5.75"/><circle cx="1242.8" cy="303.3" r="5.75"/><circle cx="1243.5" cy="304.0" r="5.75"/><circle cx="996.5" cy="287.2" r="5.75"/><circle cx="1005.4" cy="280.7" r="5.75"/><circle cx="1007.0" cy="287.0" r="5.75"/><circle cx="1005.5" cy="286.0" r="5.75"/><circle cx="1004.8" cy="293.0" r="5.75"/><circle cx="1006.3" cy="300.7" r="5.75"/><circle cx="1030.9" cy="291.3" r="5.75"/><circle cx="1031.5" cy="292.0" r="5.75"/><circle cx="1037.4" cy="287.0" r="5.75"/><circle cx="1038.0" cy="288.0" r="5.75"/><circle cx="1043.5" cy="294.1" r="5.75"/><circle cx="1050.4" cy="289.8" r="5.75"/><circle cx="1061.3" cy="283.3" r="5.75"/><circle cx="1058.7" cy="300.0" r="5.75"/><circle cx="1073.9" cy="307.2" r="5.75"/><circle cx="1078.0" cy="293.5" r="5.75"/><circle cx="1088.5" cy="294.1" r="5.75"/><circle cx="1095.0" cy="297.8" r="5.75"/><circle cx="1104.3" cy="306.1" r="5.75"/><circle cx="1094.3" cy="313.3" r="5.75"/><circle cx="1104.3" cy="321.7" r="5.75"/><circle cx="1117.8" cy="289.8" r="5.75"/><circle cx="1129.3" cy="301.7" r="5.75"/><circle cx="1144.3" cy="301.3" r="5.75"/><circle cx="1146.1" cy="306.5" r="5.75"/><circle cx="1154.8" cy="296.7" r="5.75"/><circle cx="1150.4" cy="314.8" r="5.75"/><circle cx="1171.1" cy="302.8" r="5.75"/><circle cx="1165.0" cy="309.8" r="5.75"/><circle cx="1138.5" cy="326.7" r="5.75"/><circle cx="1139.5" cy="327.0" r="5.75"/><circle cx="1143.5" cy="327.4" r="5.75"/><circle cx="1154.3" cy="324.6" r="5.75"/><circle cx="1157.0" cy="331.7" r="5.75"/><circle cx="1176.5" cy="332.2" r="5.75"/><circle cx="1177.0" cy="332.5" r="5.75"/><circle cx="1180.9" cy="334.8" r="5.75"/><circle cx="1169.6" cy="340.9" r="5.75"/><circle cx="1190.0" cy="339.8" r="5.75"/><circle cx="1198.7" cy="324.6" r="5.75"/><circle cx="1196.1" cy="346.7" r="5.75"/><circle cx="1200.0" cy="346.7" r="5.75"/><circle cx="1205.4" cy="342.0" r="5.75"/><circle cx="1223.3" cy="350.7" r="5.75"/><circle cx="1229.8" cy="347.0" r="5.75"/><circle cx="1229.8" cy="355.7" r="5.75"/><circle cx="1230.9" cy="367.0" r="5.75"/><circle cx="1248.3" cy="345.2" r="5.75"/><circle cx="1252.2" cy="358.7" r="5.75"/><circle cx="1169.6" cy="360.4" r="5.75"/><circle cx="1178.7" cy="367.0" r="5.75"/><circle cx="1192.8" cy="369.6" r="5.75"/><circle cx="1103.0" cy="338.0" r="5.75"/><circle cx="1104.8" cy="353.9" r="5.75"/><circle cx="1067.4" cy="347.4" r="5.75"/><circle cx="1071.1" cy="352.8" r="5.75"/><circle cx="992.8" cy="359.3" r="5.75"/><circle cx="1031.3" cy="363.7" r="5.75"/><circle cx="1040.0" cy="362.2" r="5.75"/><circle cx="953.5" cy="375.0" r="5.75"/><circle cx="973.5" cy="380.4" r="5.75"/><circle cx="949.6" cy="393.9" r="5.75"/><circle cx="971.3" cy="393.9" r="5.75"/><circle cx="977.8" cy="398.3" r="5.75"/><circle cx="944.8" cy="410.9" r="5.75"/><circle cx="994.5" cy="381.3" r="5.75"/><circle cx="989.0" cy="414.9" r="5.75"/><circle cx="1004.5" cy="411.4" r="5.75"/><circle cx="1007.5" cy="405.0" r="5.75"/><circle cx="1019.6" cy="413.1" r="5.75"/><circle cx="1028.8" cy="417.7" r="5.75"/><circle cx="1061.8" cy="379.0" r="5.75"/><circle cx="1070.6" cy="397.1" r="5.75"/><circle cx="1072.4" cy="408.0" r="5.75"/><circle cx="1084.5" cy="383.6" r="5.75"/><circle cx="1103.5" cy="395.9" r="5.75"/><circle cx="1113.5" cy="397.5" r="5.75"/><circle cx="1128.6" cy="375.5" r="5.75"/><circle cx="1125.1" cy="379.7" r="5.75"/><circle cx="1159.2" cy="382.0" r="5.75"/><circle cx="797.4" cy="400.4" r="5.75"/><circle cx="799.6" cy="406.1" r="5.75"/><circle cx="800.7" cy="412.6" r="5.75"/><circle cx="820.9" cy="394.6" r="5.75"/><circle cx="824.6" cy="398.3" r="5.75"/><circle cx="839.8" cy="388.0" r="5.75"/><circle cx="834.8" cy="405.4" r="5.75"/><circle cx="860.0" cy="398.3" r="5.75"/><circle cx="846.3" cy="415.7" r="5.75"/><circle cx="848.5" cy="417.4" r="5.75"/><circle cx="867.4" cy="416.3" r="5.75"/><circle cx="827.8" cy="431.5" r="5.75"/><circle cx="853.9" cy="431.5" r="5.75"/><circle cx="895.2" cy="388.0" r="5.75"/><circle cx="890.4" cy="395.7" r="5.75"/><circle cx="889.3" cy="404.3" r="5.75"/><circle cx="908.3" cy="392.4" r="5.75"/><circle cx="908.8" cy="393.0" r="5.75"/><circle cx="886.1" cy="417.8" r="5.75"/><circle cx="907.2" cy="414.6" r="5.75"/><circle cx="897.8" cy="428.3" r="5.75"/><circle cx="927.8" cy="429.8" r="5.75"/><circle cx="759.4" cy="519.1" r="5.75"/><circle cx="721.7" cy="507.8" r="5.75"/><circle cx="719.6" cy="514.3" r="5.75"/><circle cx="727.5" cy="511.4" r="5.75"/><circle cx="725.4" cy="523.8" r="5.75"/><circle cx="716.7" cy="528.1" r="5.75"/><circle cx="710.1" cy="527.4" r="5.75"/><circle cx="704.8" cy="521.6" r="5.75"/><circle cx="699.3" cy="532.5" r="5.75"/><circle cx="694.9" cy="523.8" r="5.75"/><circle cx="693.8" cy="515.1" r="5.75"/><circle cx="683.3" cy="535.7" r="5.75"/><circle cx="678.7" cy="523.8" r="5.75"/><circle cx="668.8" cy="522.3" r="5.75"/><circle cx="670.3" cy="531.3" r="5.75"/><circle cx="665.9" cy="538.3" r="5.75"/><circle cx="659.4" cy="544.1" r="5.75"/><circle cx="656.5" cy="532.5" r="5.75"/><circle cx="651.4" cy="536.1" r="5.75"/><circle cx="652.0" cy="536.5" r="5.75"/><circle cx="737.0" cy="522.3" r="5.75"/><circle cx="740.6" cy="520.1" r="5.75"/><circle cx="744.2" cy="516.5" r="5.75"/><circle cx="751.4" cy="512.2" r="5.75"/><circle cx="760.1" cy="510.7" r="5.75"/><circle cx="721.3" cy="413.0" r="5.75"/><circle cx="715.9" cy="423.9" r="5.75"/><circle cx="753.8" cy="400.1" r="5.75"/><circle cx="764.2" cy="401.0" r="5.75"/><circle cx="740.6" cy="407.7" r="5.75"/><circle cx="722.2" cy="412.4" r="5.75"/><circle cx="778.4" cy="404.8" r="5.75"/><circle cx="785.9" cy="405.8" r="5.75"/><circle cx="788.8" cy="418.0" r="5.75"/><circle cx="786.0" cy="428.9" r="5.75"/><circle cx="717.9" cy="423.7" r="5.75"/><circle cx="417.9" cy="591.4" r="5.75"/><circle cx="418.2" cy="591.6" r="5.75"/><circle cx="418.0" cy="591.0" r="5.75"/><circle cx="429.2" cy="592.3" r="5.75"/><circle cx="440.5" cy="591.4" r="5.75"/><circle cx="446.2" cy="589.5" r="5.75"/><circle cx="442.4" cy="577.2" r="5.75"/><circle cx="440.0" cy="582.0" r="5.75"/><circle cx="442.4" cy="587.6" r="5.75"/><circle cx="443.0" cy="588.0" r="5.75"/><circle cx="459.3" cy="592.3" r="5.75"/><circle cx="464.1" cy="592.3" r="5.75"/><circle cx="465.0" cy="577.6" r="5.75"/><circle cx="471.6" cy="578.2" r="5.75"/><circle cx="480.1" cy="573.5" r="5.75"/><circle cx="486.3" cy="570.7" r="5.75"/><circle cx="480.6" cy="585.7" r="5.75"/><circle cx="480.1" cy="582.9" r="5.75"/><circle cx="495.1" cy="580.1" r="5.75"/><circle cx="499.9" cy="577.6" r="5.75"/><circle cx="505.5" cy="565.0" r="5.75"/><circle cx="510.2" cy="568.8" r="5.75"/><circle cx="508.3" cy="572.5" r="5.75"/><circle cx="509.7" cy="576.3" r="5.75"/><circle cx="522.5" cy="561.2" r="5.75"/><circle cx="524.3" cy="565.0" r="5.75"/><circle cx="520.6" cy="573.5" r="5.75"/><circle cx="532.8" cy="563.1" r="5.75"/><circle cx="534.1" cy="566.9" r="5.75"/><circle cx="549.8" cy="554.6" r="5.75"/><circle cx="557.9" cy="549.9" r="5.75"/><circle cx="547.0" cy="565.0" r="5.75"/><circle cx="549.8" cy="569.7" r="5.75"/><circle cx="556.4" cy="561.2" r="5.75"/><circle cx="556.8" cy="564.1" r="5.75"/><circle cx="574.3" cy="556.1" r="5.75"/><circle cx="576.2" cy="561.2" r="5.75"/><circle cx="581.8" cy="544.3" r="5.75"/><circle cx="585.6" cy="543.3" r="5.75"/><circle cx="586.0" cy="543.8" r="5.75"/><circle cx="583.7" cy="546.2" r="5.75"/><circle cx="587.5" cy="554.6" r="5.75"/><circle cx="597.8" cy="546.7" r="5.75"/><circle cx="600.6" cy="549.0" r="5.75"/><circle cx="596.9" cy="551.8" r="5.75"/><circle cx="608.2" cy="547.1" r="5.75"/><circle cx="614.4" cy="539.6" r="5.75"/><circle cx="615.0" cy="540.0" r="5.75"/><circle cx="614.8" cy="553.7" r="5.75"/><circle cx="633.6" cy="545.2" r="5.75"/><circle cx="638.3" cy="552.4" r="5.75"/><circle cx="635.5" cy="549.9" r="5.75"/><circle cx="649.6" cy="536.7" r="5.75"/><circle cx="650.0" cy="537.0" r="5.75"/><circle cx="657.2" cy="533.0" r="5.75"/><circle cx="658.1" cy="543.3" r="5.75"/><circle cx="785.3" cy="442.1" r="5.75"/><circle cx="776.4" cy="451.0" r="5.75"/><circle cx="784.4" cy="460.3" r="5.75"/><circle cx="717.3" cy="440.3" r="5.75"/><circle cx="722.7" cy="451.4" r="5.75"/><circle cx="717.8" cy="460.3" r="5.75"/><circle cx="720.4" cy="467.4" r="5.75"/><circle cx="724.0" cy="475.4" r="5.75"/><circle cx="720.9" cy="483.4" r="5.75"/><circle cx="715.6" cy="496.3" r="5.75"/><circle cx="724.0" cy="500.3" r="5.75"/><circle cx="735.6" cy="446.6" r="5.75"/><circle cx="739.1" cy="455.4" r="5.75"/><circle cx="730.2" cy="459.0" r="5.75"/><circle cx="733.8" cy="467.9" r="5.75"/><circle cx="740.9" cy="467.9" r="5.75"/><circle cx="736.4" cy="483.0" r="5.75"/><circle cx="730.2" cy="483.0" r="5.75"/><circle cx="737.3" cy="499.0" r="5.75"/><circle cx="752.4" cy="457.2" r="5.75"/><circle cx="757.8" cy="464.3" r="5.75"/><circle cx="755.1" cy="471.4" r="5.75"/><circle cx="749.8" cy="475.9" r="5.75"/><circle cx="762.2" cy="477.7" r="5.75"/><circle cx="764.0" cy="482.1" r="5.75"/><circle cx="748.0" cy="491.0" r="5.75"/><circle cx="757.8" cy="490.1" r="5.75"/><circle cx="767.6" cy="497.2" r="5.75"/><circle cx="775.6" cy="499.9" r="5.75"/><circle cx="752.4" cy="501.7" r="5.75"/><circle cx="760.4" cy="502.6" r="5.75"/><circle cx="767.6" cy="467.0" r="5.75"/><circle cx="769.3" cy="460.8" r="5.75"/><circle cx="768.4" cy="453.7" r="5.75"/><circle cx="761.3" cy="449.2" r="5.75"/><circle cx="757.8" cy="440.3" r="5.75"/><circle cx="751.6" cy="441.2" r="5.75"/><circle cx="773.8" cy="482.1" r="5.75"/><circle cx="785.3" cy="483.0" r="5.75"/><circle cx="773.8" cy="438.6" r="5.75"/><circle cx="738.2" cy="437.7" r="5.75"/><circle cx="725.8" cy="442.1" r="5.75"/><circle cx="762.0" cy="479.0" r="5.75"/><circle cx="755.5" cy="473.0" r="5.75"/><circle cx="734.0" cy="466.0" r="5.75"/><circle cx="722.0" cy="468.0" r="5.75"/><circle cx="752.5" cy="398.8" r="5.75"/><circle cx="753.9" cy="400.5" r="5.75"/><circle cx="756.7" cy="403.0" r="5.75"/><circle cx="760.6" cy="402.0" r="5.75"/><circle cx="765.2" cy="402.7" r="5.75"/><circle cx="773.1" cy="402.3" r="5.75"/><circle cx="745.2" cy="408.1" r="5.75"/><circle cx="750.5" cy="406.0" r="5.75"/><circle cx="756.6" cy="408.5" r="5.75"/><circle cx="760.3" cy="406.8" r="5.75"/><circle cx="767.2" cy="408.5" r="5.75"/><circle cx="773.3" cy="408.5" r="5.75"/><circle cx="776.1" cy="406.7" r="5.75"/><circle cx="781.4" cy="408.5" r="5.75"/><circle cx="726.5" cy="412.3" r="5.75"/><circle cx="733.8" cy="412.8" r="5.75"/><circle cx="737.1" cy="412.5" r="5.75"/><circle cx="742.7" cy="410.2" r="5.75"/><circle cx="748.6" cy="413.1" r="5.75"/><circle cx="753.5" cy="413.2" r="5.75"/><circle cx="756.6" cy="411.6" r="5.75"/><circle cx="760.4" cy="412.5" r="5.75"/><circle cx="765.2" cy="410.3" r="5.75"/><circle cx="770.8" cy="410.6" r="5.75"/><circle cx="776.4" cy="410.2" r="5.75"/><circle cx="780.0" cy="410.6" r="5.75"/><circle cx="785.4" cy="411.5" r="5.75"/><circle cx="721.5" cy="415.5" r="5.75"/><circle cx="728.4" cy="419.0" r="5.75"/><circle cx="731.9" cy="416.9" r="5.75"/><circle cx="735.3" cy="415.4" r="5.75"/><circle cx="741.4" cy="416.1" r="5.75"/><circle cx="748.3" cy="415.6" r="5.75"/><circle cx="750.1" cy="418.8" r="5.75"/><circle cx="757.1" cy="415.6" r="5.75"/><circle cx="762.2" cy="415.1" r="5.75"/><circle cx="767.1" cy="418.9" r="5.75"/><circle cx="773.5" cy="417.8" r="5.75"/><circle cx="776.0" cy="416.5" r="5.75"/><circle cx="780.7" cy="418.1" r="5.75"/><circle cx="787.1" cy="418.1" r="5.75"/><circle cx="718.4" cy="423.2" r="5.75"/><circle cx="723.3" cy="423.0" r="5.75"/><circle cx="725.9" cy="422.1" r="5.75"/><circle cx="731.4" cy="420.1" r="5.75"/><circle cx="735.1" cy="421.1" r="5.75"/><circle cx="741.0" cy="422.8" r="5.75"/><circle cx="748.8" cy="421.8" r="5.75"/><circle cx="753.7" cy="424.0" r="5.75"/><circle cx="758.8" cy="421.5" r="5.75"/><circle cx="760.9" cy="420.9" r="5.75"/><circle cx="765.8" cy="420.8" r="5.75"/><circle cx="772.5" cy="423.6" r="5.75"/><circle cx="778.4" cy="421.9" r="5.75"/><circle cx="782.6" cy="423.2" r="5.75"/><circle cx="785.3" cy="422.6" r="5.75"/><circle cx="721.3" cy="428.2" r="5.75"/><circle cx="728.9" cy="426.6" r="5.75"/><circle cx="731.6" cy="428.8" r="5.75"/><circle cx="737.9" cy="425.7" r="5.75"/><circle cx="740.5" cy="425.6" r="5.75"/><circle cx="748.6" cy="428.2" r="5.75"/><circle cx="750.6" cy="428.3" r="5.75"/><circle cx="758.9" cy="427.6" r="5.75"/><circle cx="761.4" cy="427.2" r="5.75"/><circle cx="765.5" cy="425.1" r="5.75"/><circle cx="773.9" cy="427.6" r="5.75"/><circle cx="777.1" cy="428.7" r="5.75"/><circle cx="781.7" cy="428.5" r="5.75"/><circle cx="716.0" cy="431.7" r="5.75"/><circle cx="720.5" cy="433.6" r="5.75"/><circle cx="726.4" cy="431.8" r="5.75"/><circle cx="732.3" cy="433.6" r="5.75"/><circle cx="736.7" cy="433.7" r="5.75"/><circle cx="742.0" cy="432.1" r="5.75"/><circle cx="747.1" cy="430.1" r="5.75"/><circle cx="751.8" cy="430.7" r="5.75"/><circle cx="755.0" cy="433.2" r="5.75"/><circle cx="760.7" cy="431.9" r="5.75"/><circle cx="767.9" cy="432.2" r="5.75"/><circle cx="771.3" cy="432.1" r="5.75"/><circle cx="777.2" cy="433.1" r="5.75"/><circle cx="780.4" cy="432.2" r="5.75"/><circle cx="718.6" cy="436.8" r="5.75"/><circle cx="722.5" cy="437.0" r="5.75"/><circle cx="727.0" cy="437.8" r="5.75"/><circle cx="731.8" cy="437.1" r="5.75"/><circle cx="736.9" cy="438.8" r="5.75"/><circle cx="742.8" cy="438.5" r="5.75"/><circle cx="748.8" cy="436.0" r="5.75"/><circle cx="752.2" cy="438.8" r="5.75"/><circle cx="758.4" cy="435.5" r="5.75"/><circle cx="760.5" cy="436.8" r="5.75"/><circle cx="765.3" cy="436.0" r="5.75"/><circle cx="770.3" cy="437.7" r="5.75"/><circle cx="725.6" cy="441.7" r="5.75"/><circle cx="750.1" cy="441.3" r="5.75"/><circle cx="757.5" cy="442.0" r="5.75"/><circle cx="760.3" cy="443.9" r="5.75"/><circle cx="768.2" cy="443.9" r="5.75"/><circle cx="770.4" cy="441.1" r="5.75"/><circle cx="751.8" cy="446.4" r="5.75"/><circle cx="757.2" cy="448.7" r="5.75"/><circle cx="761.1" cy="445.5" r="5.75"/><circle cx="767.1" cy="446.0" r="5.75"/><circle cx="770.4" cy="445.6" r="5.75"/><circle cx="766.6" cy="451.4" r="5.75"/><circle cx="735.4" cy="463.4" r="5.75"/><circle cx="726.0" cy="478.1" r="5.75"/><circle cx="734.0" cy="515.2" r="5.75"/><circle cx="732.6" cy="515.5" r="5.75"/><circle cx="750.1" cy="482.2" r="5.75"/><circle cx="729.3" cy="482.3" r="5.75"/><circle cx="720.8" cy="474.8" r="5.75"/><circle cx="737.1" cy="462.8" r="5.75"/><circle cx="758.5" cy="484.1" r="5.75"/><circle cx="771.0" cy="493.3" r="5.75"/><circle cx="768.4" cy="509.3" r="5.75"/><circle cx="743.6" cy="469.5" r="5.75"/><circle cx="769.0" cy="492.3" r="5.75"/><circle cx="769.8" cy="504.5" r="5.75"/><circle cx="724.6" cy="483.7" r="5.75"/><circle cx="752.3" cy="506.1" r="5.75"/><circle cx="775.2" cy="505.5" r="5.75"/><circle cx="758.4" cy="510.3" r="5.75"/><circle cx="765.9" cy="495.9" r="5.75"/><circle cx="731.5" cy="448.2" r="5.75"/><circle cx="724.1" cy="472.0" r="5.75"/><circle cx="756.4" cy="491.2" r="5.75"/><circle cx="761.6" cy="495.0" r="5.75"/><circle cx="751.2" cy="446.2" r="5.75"/><circle cx="774.6" cy="499.9" r="5.75"/><circle cx="752.2" cy="484.5" r="5.75"/><circle cx="764.1" cy="450.8" r="5.75"/><circle cx="770.0" cy="464.2" r="5.75"/><circle cx="719.7" cy="465.1" r="5.75"/><circle cx="769.4" cy="460.8" r="5.75"/><circle cx="751.5" cy="473.5" r="5.75"/><circle cx="750.4" cy="495.2" r="5.75"/><circle cx="772.3" cy="490.4" r="5.75"/><circle cx="762.8" cy="451.6" r="5.75"/><circle cx="725.2" cy="464.3" r="5.75"/><circle cx="757.1" cy="446.9" r="5.75"/><circle cx="718.6" cy="465.4" r="5.75"/><circle cx="765.1" cy="495.8" r="5.75"/><circle cx="765.4" cy="466.9" r="5.75"/><circle cx="753.3" cy="479.5" r="5.75"/><circle cx="749.4" cy="454.5" r="5.75"/><circle cx="781.9" cy="460.3" r="5.75"/><circle cx="715.3" cy="479.0" r="5.75"/><circle cx="729.9" cy="514.1" r="5.75"/><circle cx="724.8" cy="483.7" r="5.75"/></g></svg>
<div class="btn" style="left:410px;top:660px;width:31.3px;height:31.3px;border-radius:3px"></div>
<div class="btn" style="left:446.7px;top:660px;width:31.3px;height:31.3px;border-radius:3px"></div>
<div class="btn" style="left:483.3px;top:660px;width:31.4px;height:31.3px;border-radius:3px"></div>
<div class="abs" style="left:423px;top:672px;width:0;height:0;border-top:3.5px solid transparent;border-bottom:3.5px solid transparent;border-right:4px solid #555"></div>
<svg class="abs" style="left:454.5px;top:667.5px" width="16" height="16" viewBox="0 0 16 16" fill="none" stroke="#999" stroke-width="1">
<rect x="1.5" y="2.5" width="13" height="12"/><path d="M1.5 5.5 H14.5 M4.5 1 V4 M11.5 1 V4"/><rect x="9.5" y="10" width="3" height="2.5" fill="#999" stroke="none"/></svg>
<svg class="abs" style="left:491px;top:668px" width="16" height="16" viewBox="0 0 16 16" fill="none" stroke="#999" stroke-width="1.1">
<circle cx="8" cy="8" r="7"/><path d="M8 4 V8 H11"/></svg>
<div class="btn" style="left:754.7px;top:660px;width:31.3px;height:31.3px;border-radius:3px"></div>
<div class="btn" style="left:790px;top:660px;width:71.3px;height:31.3px;border-radius:0px"></div>
<div class="btn" style="left:861.3px;top:660px;width:32.0px;height:31.3px;border-radius:0px"></div>
<div class="btn" style="left:898px;top:660px;width:30.7px;height:31.3px;border-radius:3px"></div>
<div class="btn" style="left:790px;top:660px;width:103.3px;height:31.3px;border-radius:3px"></div>
<div class="abs" style="left:861px;top:660px;width:1px;height:31px;background:#dcdcdc"></div>
<svg class="abs" style="left:761px;top:668px" width="18" height="18" viewBox="0 0 18 18">
<path d="M0.6 1.2 V16.4 H16.4" stroke="#777" stroke-width="1.1" fill="none"/>
<g fill="#444"><circle cx="4.2" cy="11.8" r="1.4"/><circle cx="7.4" cy="13.5" r="1.4"/><circle cx="6.4" cy="8.4" r="1.4"/><circle cx="9.6" cy="10.5" r="1.4"/><circle cx="10" cy="7" r="1.4"/><circle cx="13.1" cy="9.9" r="1.4"/><circle cx="11.5" cy="3.7" r="1.4"/><circle cx="14.5" cy="6.5" r="1.4"/><circle cx="14.9" cy="2.6" r="1.4"/></g></svg>
<div class="t" style="left:825.7px;top:669.0px;font-size:14px;color:#333;font-weight:normal;height:14px;line-height:14px;transform:translateX(-50%);">8 hours</div>
<svg class="abs" style="left:869px;top:667px" width="16" height="17" viewBox="0 0 16 17" fill="none" stroke="#555" stroke-width="1.4">
<rect x="2.5" y="7.5" width="11" height="8.5"/><path d="M5 7.5 V4.5 Q5 1.5 8 1.5 Q11 1.5 11 4"/><circle cx="8" cy="11.7" r="0.9" fill="#555"/></svg>
<svg class="abs" style="left:905px;top:668px" width="17" height="16" viewBox="0 0 17 16" fill="none" stroke="#555" stroke-width="1.4">
<path d="M3.5 9 A6 6 0 1 0 5 3.5"/><path d="M2.5 1.5 V5.5 H6.5" stroke-width="1.3"/><path d="M9.5 5 V9 L12 10.5"/></svg>
<div class="btn" style="left:1172px;top:660px;width:31.3px;height:31.3px;border-radius:3px"></div>
<div class="btn" style="left:1208.7px;top:660px;width:31.3px;height:31.3px;border-radius:3px"></div>
<div class="btn" style="left:1240px;top:660px;width:31.3px;height:31.3px;border-radius:3px"></div>
<svg class="abs" style="left:1180px;top:667.5px" width="16" height="16" viewBox="0 0 16 16" fill="none" stroke="#999" stroke-width="1">
<rect x="1.5" y="2.5" width="13" height="12"/><path d="M1.5 5.5 H14.5 M4.5 1 V4 M11.5 1 V4"/><rect x="9.5" y="10" width="3" height="2.5" fill="#999" stroke="none"/></svg>
<svg class="abs" style="left:1216.5px;top:668px" width="16" height="16" viewBox="0 0 16 16" fill="none" stroke="#999" stroke-width="1.1">
<circle cx="8" cy="8" r="7"/><path d="M8 4 V8 H11"/></svg>
<div class="abs" style="left:1254px;top:672px;width:0;height:0;border-top:3.5px solid transparent;border-bottom:3.5px solid transparent;border-left:4px solid #555"></div>
<svg class="abs" style="left:410px;top:699px" width="862" height="46" viewBox="0 -1 862 46"><defs><clipPath id="cu"><rect x="0" y="0" width="573.5" height="30"/></clipPath><clipPath id="cs"><rect x="573.5" y="0" width="288" height="30"/></clipPath></defs><rect x="0" y="0" width="862" height="30" fill="#fff"/><rect x="573.5" y="0" width="288" height="30" fill="#f1f1f1"/><g clip-path="url(#cu)" fill="none" opacity="0.8"><path d="M-83.6 29.5 L-78.6 23.0 L-73.6 18.3 L-72.6 17.1 L-71.6 17.4 L-70.6 16.9 L-69.6 17.0 L-68.6 16.9 L-67.6 15.9 L-66.6 15.6 L-65.6 16.6 L-64.6 15.6 L-63.6 15.3 L-62.6 16.2 L-54.6 6.0 L-53.6 5.5 L-52.6 5.6 L-51.6 4.8 L-50.6 4.7 L-49.6 3.8 L-48.6 4.0 L-47.6 4.0 L-46.6 3.2 L-45.6 3.1 L-44.6 2.7 L-43.6 1.7 L-42.6 2.2 L-41.6 1.5 L-41.6 29.5 L-35.3 29.5 L-35.3 29.5 L-30.3 23.0 L-25.3 18.3 L-24.3 17.6 L-23.3 17.0 L-22.3 16.4 L-21.3 17.4 L-20.3 16.7 L-19.3 16.8 L-18.3 16.8 L-17.3 16.4 L-16.3 16.5 L-15.3 15.6 L-14.3 15.9 L-6.3 6.0 L-5.3 5.4 L-4.3 5.7 L-3.3 5.3 L-2.3 4.0 L-1.3 3.7 L-0.3 3.5 L0.7 4.1 L1.7 3.1 L2.7 3.0 L3.7 2.3 L4.7 2.2 L5.7 1.7 L6.7 1.5 L6.7 29.5 L13.0 29.5 L13.0 29.5 L18.0 23.0 L23.0 18.3 L24.0 17.3 L25.0 17.4 L26.0 17.2 L27.0 17.5 L28.0 17.0 L29.0 17.1 L30.0 16.8 L31.0 16.8 L32.0 16.1 L33.0 15.2 L34.0 16.0 L42.0 6.0 L43.0 6.1 L44.0 5.7 L45.0 4.9 L46.0 4.8 L47.0 3.8 L48.0 4.2 L49.0 3.6 L50.0 2.9 L51.0 2.3 L52.0 3.0 L53.0 2.8 L54.0 1.4 L55.0 1.5 L55.0 29.5 L61.3 29.5 L61.3 29.5 L66.3 23.0 L71.3 18.3 L72.3 17.9 L73.3 17.2 L74.3 16.6 L75.3 16.6 L76.3 17.1 L77.3 17.0 L78.3 15.7 L79.3 16.3 L80.3 15.3 L81.3 16.0 L82.3 15.3 L90.3 6.0 L91.3 6.0 L92.3 5.7 L93.3 4.8 L94.3 5.1 L95.3 4.0 L96.3 3.3 L97.3 3.6 L98.3 2.6 L99.3 2.5 L100.3 2.4 L101.3 2.3 L102.3 1.5 L103.3 1.5 L103.3 29.5 L109.6 29.5 L109.6 29.5 L114.6 23.0 L119.6 18.3 L120.6 16.9 L121.6 17.8 L122.6 16.8 L123.6 17.5 L124.6 17.3 L125.6 16.3 L126.6 16.2 L127.6 16.1 L128.6 16.1 L129.6 15.8 L130.6 15.6 L138.6 6.0 L139.6 5.6 L140.6 5.7 L141.6 4.8 L142.6 4.4 L143.6 4.4 L144.6 3.5 L145.6 3.3 L146.6 3.8 L147.6 2.9 L148.6 2.6 L149.6 1.6 L150.6 1.8 L151.6 1.5 L151.6 29.5 L157.9 29.5 L157.9 29.5 L162.9 23.0 L167.9 18.3 L168.9 17.6 L169.9 16.6 L170.9 17.3 L171.9 17.1 L172.9 16.1 L173.9 16.7 L174.9 16.3 L175.9 16.4 L176.9 15.7 L177.9 16.0 L178.9 15.8 L186.9 6.0 L187.9 4.9 L188.9 4.6 L189.9 5.1 L190.9 5.1 L191.9 3.9 L192.9 3.8 L193.9 3.6 L194.9 3.0 L195.9 2.7 L196.9 2.3 L197.9 2.0 L198.9 2.0 L199.9 1.5 L199.9 29.5 L206.2 29.5 L206.2 29.5 L211.2 23.0 L216.2 18.3 L217.2 17.2 L218.2 17.1 L219.2 17.5 L220.2 16.2 L221.2 16.8 L222.2 16.8 L223.2 16.0 L224.2 15.7 L225.2 16.3 L226.2 15.3 L227.2 15.1 L235.2 6.0 L236.2 5.4 L237.2 5.4 L238.2 4.4 L239.2 4.3 L240.2 4.0 L241.2 4.3 L242.2 3.4 L243.2 3.6 L244.2 2.5 L245.2 2.3 L246.2 2.4 L247.2 2.3 L248.2 1.5 L248.2 29.5 L254.5 29.5 L254.5 29.5 L259.5 23.0 L264.5 18.3 L265.5 17.4 L266.5 16.9 L267.5 16.6 L268.5 16.9 L269.5 16.3 L270.5 16.9 L271.5 16.8 L272.5 15.7 L273.5 15.6 L274.5 16.1 L275.5 15.7 L283.5 6.0 L284.5 5.9 L285.5 5.0 L286.5 4.4 L287.5 4.3 L288.5 4.5 L289.5 3.6 L290.5 3.3 L291.5 3.1 L292.5 2.8 L293.5 2.4 L294.5 2.7 L295.5 1.5 L296.5 1.5 L296.5 29.5 L302.8 29.5 L302.8 29.5 L307.8 23.0 L312.8 18.3 L313.8 16.8 L314.8 17.9 L315.8 17.6 L316.8 17.6 L317.8 16.6 L318.8 17.1 L319.8 16.9 L320.8 15.7 L321.8 16.2 L322.8 16.2 L323.8 15.7 L331.8 6.0 L332.8 5.5 L333.8 4.9 L334.8 4.6 L335.8 4.2 L336.8 3.7 L337.8 4.0 L338.8 3.3 L339.8 3.6 L340.8 2.3 L341.8 3.0 L342.8 2.4 L343.8 2.4 L344.8 1.5 L344.8 29.5 L351.1 29.5 L351.1 29.5 L356.1 23.0 L361.1 18.3 L362.1 18.1 L363.1 17.9 L364.1 17.2 L365.1 16.2 L366.1 17.0 L367.1 16.0 L368.1 16.0 L369.1 16.3 L370.1 15.9 L371.1 15.6 L372.1 16.1 L380.1 6.0 L381.1 5.6 L382.1 5.0 L383.1 4.5 L384.1 4.9 L385.1 4.2 L386.1 4.2 L387.1 3.3 L388.1 2.8 L389.1 2.9 L390.1 2.9 L391.1 1.8 L392.1 2.2 L393.1 1.5 L393.1 29.5 L399.4 29.5 L399.4 29.5 L404.4 23.0 L409.4 18.3 L410.4 18.1 L411.4 17.7 L412.4 17.6 L413.4 16.2 L414.4 16.9 L415.4 17.0 L416.4 15.7 L417.4 15.8 L418.4 15.6 L419.4 15.7 L420.4 15.4 L428.4 6.0 L429.4 5.5 L430.4 5.5 L431.4 4.2 L432.4 4.0 L433.4 3.7 L434.4 3.4 L435.4 3.0 L436.4 3.8 L437.4 3.3 L438.4 2.0 L439.4 2.2 L440.4 1.6 L441.4 1.5 L441.4 29.5 L447.7 29.5 L447.7 29.5 L452.7 23.0 L457.7 18.3 L458.7 17.2 L459.7 17.1 L460.7 17.3 L461.7 17.0 L462.7 16.5 L463.7 16.1 L464.7 16.1 L465.7 15.6 L466.7 16.0 L467.7 16.0 L468.7 15.3 L476.7 6.0 L477.7 5.0 L478.7 4.8 L479.7 4.7 L480.7 4.6 L481.7 4.5 L482.7 3.7 L483.7 3.9 L484.7 3.3 L485.7 2.8 L486.7 2.4 L487.7 2.2 L488.7 2.1 L489.7 1.5 L489.7 29.5 L496.0 29.5 L496.0 29.5 L501.0 23.0 L506.0 18.3 L507.0 17.4 L508.0 17.6 L509.0 17.0 L510.0 16.5 L511.0 16.8 L512.0 16.8 L513.0 15.7 L514.0 16.0 L515.0 15.8 L516.0 16.2 L517.0 16.1 L525.0 6.0 L526.0 5.3 L527.0 5.6 L528.0 5.2 L529.0 4.2 L530.0 4.1 L531.0 3.4 L532.0 3.9 L533.0 3.4 L534.0 3.3 L535.0 2.9 L536.0 2.4 L537.0 2.2 L538.0 1.5 L538.0 29.5 L544.3 29.5 L544.3 29.5 L549.3 23.0 L554.3 18.3 L555.3 17.6 L556.3 16.7 L557.3 17.2 L558.3 16.2 L559.3 16.2 L560.3 16.9 L561.3 15.7 L562.3 15.5 L563.3 15.3 L564.3 16.2 L565.3 15.1 L573.3 6.0 L574.3 4.9 L575.3 5.6 L576.3 4.4 L577.3 4.9 L578.3 4.4 L579.3 4.3 L580.3 4.1 L581.3 3.3 L582.3 3.2 L583.3 2.0 L584.3 2.5 L585.3 1.9 L586.3 1.5 L586.3 29.5 L592.6 29.5 L592.6 29.5 L597.6 23.0 L602.6 18.3 L603.6 17.8 L604.6 16.7 L605.6 17.4 L606.6 17.5 L607.6 16.1 L608.6 16.3 L609.6 16.4 L610.6 16.6 L611.6 15.5 L612.6 15.3 L613.6 15.1 L621.6 6.0 L622.6 5.6 L623.6 5.5 L624.6 4.7 L625.6 4.4 L626.6 4.1 L627.6 3.7 L628.6 3.4 L629.6 2.7 L630.6 2.9 L631.6 3.1 L632.6 2.1 L633.6 2.2 L634.6 1.5 L634.6 29.5 L640.9 29.5 L640.9 29.5 L645.9 23.0 L650.9 18.3 L651.9 17.0 L652.9 17.6 L653.9 17.5 L654.9 17.1 L655.9 16.7 L656.9 16.5 L657.9 16.5 L658.9 16.7 L659.9 15.4 L660.9 15.1 L661.9 15.8 L669.9 6.0 L670.9 6.0 L671.9 5.2 L672.9 4.8 L673.9 4.8 L674.9 3.8 L675.9 3.6 L676.9 3.2 L677.9 3.3 L678.9 2.6 L679.9 2.2 L680.9 2.4 L681.9 2.4 L682.9 1.5 L682.9 29.5 L689.2 29.5 L689.2 29.5 L694.2 23.0 L699.2 18.3 L700.2 17.2 L701.2 17.6 L702.2 17.0 L703.2 17.4 L704.2 16.8 L705.2 16.2 L706.2 15.9 L707.2 15.4 L708.2 15.9 L709.2 15.5 L710.2 15.0 L718.2 6.0 L719.2 5.3 L720.2 5.0 L721.2 5.2 L722.2 4.1 L723.2 4.8 L724.2 3.8 L725.2 3.6 L726.2 3.2 L727.2 3.3 L728.2 2.9 L729.2 2.3 L730.2 1.8 L731.2 1.5 L731.2 29.5 L737.5 29.5 L737.5 29.5 L742.5 23.0 L747.5 18.3 L748.5 17.8 L749.5 17.8 L750.5 17.0 L751.5 17.2 L752.5 17.3 L753.5 16.5 L754.5 15.9 L755.5 15.7 L756.5 16.2 L757.5 15.9 L758.5 16.1 L766.5 6.0 L767.5 5.9 L768.5 4.9 L769.5 4.5 L770.5 4.2 L771.5 3.8 L772.5 4.1 L773.5 4.0 L774.5 3.7 L775.5 2.6 L776.5 3.0 L777.5 2.0 L778.5 1.8 L779.5 1.5 L779.5 29.5 L785.8 29.5 L785.8 29.5 L790.8 23.0 L795.8 18.3 L796.8 17.8 L797.8 16.7 L798.8 16.5 L799.8 17.4 L800.8 16.4 L801.8 16.3 L802.8 16.4 L803.8 16.3 L804.8 15.2 L805.8 15.5 L806.8 15.4 L814.8 6.0 L815.8 5.5 L816.8 4.8 L817.8 4.9 L818.8 5.1 L819.8 4.0 L820.8 3.9 L821.8 3.1 L822.8 2.9 L823.8 3.1 L824.8 2.1 L825.8 2.7 L826.8 2.4 L827.8 1.5 L827.8 29.5 L834.1 29.5 L834.1 29.5 L839.1 23.0 L844.1 18.3 L845.1 16.9 L846.1 17.9 L847.1 16.9 L848.1 17.3 L849.1 17.1 L850.1 16.2 L851.1 16.5 L852.1 16.3 L853.1 16.3 L854.1 15.4 L855.1 15.9 L863.1 6.0 L864.1 6.1 L865.1 5.4 L866.1 4.9 L867.1 4.0 L868.1 4.2 L869.1 3.7 L870.1 3.8 L871.1 3.4 L872.1 2.9 L873.1 2.1 L874.1 2.4 L875.1 2.0 L876.1 1.5 L876.1 29.5 L882.4 29.5 L882.4 29.5 L887.4 23.0 L892.4 18.3 L893.4 17.1 L894.4 17.8 L895.4 17.3 L896.4 16.4 L897.4 17.3 L898.4 16.0 L899.4 16.1 L900.4 16.4 L901.4 16.0 L902.4 15.8 L903.4 15.7 L911.4 6.0 L912.4 5.4 L913.4 4.9 L914.4 4.5 L915.4 4.0 L916.4 4.4 L917.4 4.2 L918.4 3.6 L919.4 3.5 L920.4 2.7 L921.4 2.2 L922.4 2.1 L923.4 2.3 L924.4 1.5 L924.4 29.5 L930.7 29.5" stroke="#2c4670" stroke-width="1.15"/><path d="M-83.6 29.5 L-83.6 0.8 L-41.6 0.8 L-41.6 29.5 L-35.3 29.5 L-35.3 0.8 L6.7 0.8 L6.7 29.5 L13.0 29.5 L13.0 0.8 L55.0 0.8 L55.0 29.5 L61.3 29.5 L61.3 0.8 L103.3 0.8 L103.3 29.5 L109.6 29.5 L109.6 0.8 L151.6 0.8 L151.6 29.5 L157.9 29.5 L157.9 0.8 L199.9 0.8 L199.9 29.5 L206.2 29.5 L206.2 0.8 L248.2 0.8 L248.2 29.5 L254.5 29.5 L254.5 0.8 L296.5 0.8 L296.5 29.5 L302.8 29.5 L302.8 0.8 L344.8 0.8 L344.8 29.5 L351.1 29.5 L351.1 0.8 L393.1 0.8 L393.1 29.5 L399.4 29.5 L399.4 0.8 L441.4 0.8 L441.4 29.5 L447.7 29.5 L447.7 0.8 L489.7 0.8 L489.7 29.5 L496.0 29.5 L496.0 0.8 L538.0 0.8 L538.0 29.5 L544.3 29.5 L544.3 0.8 L586.3 0.8 L586.3 29.5 L592.6 29.5 L592.6 0.8 L634.6 0.8 L634.6 29.5 L640.9 29.5 L640.9 0.8 L682.9 0.8 L682.9 29.5 L689.2 29.5 L689.2 0.8 L731.2 0.8 L731.2 29.5 L737.5 29.5 L737.5 0.8 L779.5 0.8 L779.5 29.5 L785.8 29.5 L785.8 0.8 L827.8 0.8 L827.8 29.5 L834.1 29.5 L834.1 0.8 L876.1 0.8 L876.1 29.5 L882.4 29.5 L882.4 0.8 L924.4 0.8 L924.4 29.5" stroke="#6aae4c" stroke-width="1.8"/><path d="M-83.6 29.5 L-78.6 17.0 L-62.6 17.8 L-57.6 2.5 L-41.6 29.5 L-35.3 29.5 L-35.3 29.5 L-30.3 17.0 L-14.3 17.8 L-9.3 2.5 L6.7 29.5 L13.0 29.5 L13.0 29.5 L18.0 17.0 L34.0 17.8 L39.0 2.5 L55.0 29.5 L61.3 29.5 L61.3 29.5 L66.3 17.0 L82.3 17.8 L87.3 2.5 L103.3 29.5 L109.6 29.5 L109.6 29.5 L114.6 17.0 L130.6 17.8 L135.6 2.5 L151.6 29.5 L157.9 29.5 L157.9 29.5 L162.9 17.0 L178.9 17.8 L183.9 2.5 L199.9 29.5 L206.2 29.5 L206.2 29.5 L211.2 17.0 L227.2 17.8 L232.2 2.5 L248.2 29.5 L254.5 29.5 L254.5 29.5 L259.5 17.0 L275.5 17.8 L280.5 2.5 L296.5 29.5 L302.8 29.5 L302.8 29.5 L307.8 17.0 L323.8 17.8 L328.8 2.5 L344.8 29.5 L351.1 29.5 L351.1 29.5 L356.1 17.0 L372.1 17.8 L377.1 2.5 L393.1 29.5 L399.4 29.5 L399.4 29.5 L404.4 17.0 L420.4 17.8 L425.4 2.5 L441.4 29.5 L447.7 29.5 L447.7 29.5 L452.7 17.0 L468.7 17.8 L473.7 2.5 L489.7 29.5 L496.0 29.5 L496.0 29.5 L501.0 17.0 L517.0 17.8 L522.0 2.5 L538.0 29.5 L544.3 29.5 L544.3 29.5 L549.3 17.0 L565.3 17.8 L570.3 2.5 L586.3 29.5 L592.6 29.5 L592.6 29.5 L597.6 17.0 L613.6 17.8 L618.6 2.5 L634.6 29.5 L640.9 29.5 L640.9 29.5 L645.9 17.0 L661.9 17.8 L666.9 2.5 L682.9 29.5 L689.2 29.5 L689.2 29.5 L694.2 17.0 L710.2 17.8 L715.2 2.5 L731.2 29.5 L737.5 29.5 L737.5 29.5 L742.5 17.0 L758.5 17.8 L763.5 2.5 L779.5 29.5 L785.8 29.5 L785.8 29.5 L790.8 17.0 L806.8 17.8 L811.8 2.5 L827.8 29.5 L834.1 29.5 L834.1 29.5 L839.1 17.0 L855.1 17.8 L860.1 2.5 L876.1 29.5 L882.4 29.5 L882.4 29.5 L887.4 17.0 L903.4 17.8 L908.4 2.5 L924.4 29.5 L930.7 29.5" stroke="#d2307a" stroke-width="1.2"/><path d="M-83.6 29.5 L-78.6 16.0 L-76.1 15.0 L-58.6 2.8 L-55.6 2.8 L-50.6 8.8 L-48.6 18.0 L-41.6 29.5 L-35.3 29.5 L-35.3 29.5 L-30.3 16.0 L-27.8 15.0 L-10.3 2.8 L-7.3 2.8 L-2.3 8.8 L-0.3 18.0 L6.7 29.5 L13.0 29.5 L13.0 29.5 L18.0 16.0 L20.5 15.0 L38.0 2.8 L41.0 2.8 L46.0 8.8 L48.0 18.0 L55.0 29.5 L61.3 29.5 L61.3 29.5 L66.3 16.0 L68.8 15.0 L86.3 2.8 L89.3 2.8 L94.3 8.8 L96.3 18.0 L103.3 29.5 L109.6 29.5 L109.6 29.5 L114.6 16.0 L117.1 15.0 L134.6 2.8 L137.6 2.8 L142.6 8.8 L144.6 18.0 L151.6 29.5 L157.9 29.5 L157.9 29.5 L162.9 16.0 L165.4 15.0 L182.9 2.8 L185.9 2.8 L190.9 8.8 L192.9 18.0 L199.9 29.5 L206.2 29.5 L206.2 29.5 L211.2 16.0 L213.7 15.0 L231.2 2.8 L234.2 2.8 L239.2 8.8 L241.2 18.0 L248.2 29.5 L254.5 29.5 L254.5 29.5 L259.5 16.0 L262.0 15.0 L279.5 2.8 L282.5 2.8 L287.5 8.8 L289.5 18.0 L296.5 29.5 L302.8 29.5 L302.8 29.5 L307.8 16.0 L310.3 15.0 L327.8 2.8 L330.8 2.8 L335.8 8.8 L337.8 18.0 L344.8 29.5 L351.1 29.5 L351.1 29.5 L356.1 16.0 L358.6 15.0 L376.1 2.8 L379.1 2.8 L384.1 8.8 L386.1 18.0 L393.1 29.5 L399.4 29.5 L399.4 29.5 L404.4 16.0 L406.9 15.0 L424.4 2.8 L427.4 2.8 L432.4 8.8 L434.4 18.0 L441.4 29.5 L447.7 29.5 L447.7 29.5 L452.7 16.0 L455.2 15.0 L472.7 2.8 L475.7 2.8 L480.7 8.8 L482.7 18.0 L489.7 29.5 L496.0 29.5 L496.0 29.5 L501.0 16.0 L503.5 15.0 L521.0 2.8 L524.0 2.8 L529.0 8.8 L531.0 18.0 L538.0 29.5 L544.3 29.5 L544.3 29.5 L549.3 16.0 L551.8 15.0 L569.3 2.8 L572.3 2.8 L577.3 8.8 L579.3 18.0 L586.3 29.5 L592.6 29.5 L592.6 29.5 L597.6 16.0 L600.1 15.0 L617.6 2.8 L620.6 2.8 L625.6 8.8 L627.6 18.0 L634.6 29.5 L640.9 29.5 L640.9 29.5 L645.9 16.0 L648.4 15.0 L665.9 2.8 L668.9 2.8 L673.9 8.8 L675.9 18.0 L682.9 29.5 L689.2 29.5 L689.2 29.5 L694.2 16.0 L696.7 15.0 L714.2 2.8 L717.2 2.8 L722.2 8.8 L724.2 18.0 L731.2 29.5 L737.5 29.5 L737.5 29.5 L742.5 16.0 L745.0 15.0 L762.5 2.8 L765.5 2.8 L770.5 8.8 L772.5 18.0 L779.5 29.5 L785.8 29.5 L785.8 29.5 L790.8 16.0 L793.3 15.0 L810.8 2.8 L813.8 2.8 L818.8 8.8 L820.8 18.0 L827.8 29.5 L834.1 29.5 L834.1 29.5 L839.1 16.0 L841.6 15.0 L859.1 2.8 L862.1 2.8 L867.1 8.8 L869.1 18.0 L876.1 29.5 L882.4 29.5 L882.4 29.5 L887.4 16.0 L889.9 15.0 L907.4 2.8 L910.4 2.8 L915.4 8.8 L917.4 18.0 L924.4 29.5 L930.7 29.5" stroke="#ff5a1e" stroke-width="1.3"/></g><g clip-path="url(#cs)" fill="none" opacity="1"><path d="M-83.6 29.5 L-78.6 23.0 L-73.6 18.3 L-72.6 17.1 L-71.6 17.4 L-70.6 16.9 L-69.6 17.0 L-68.6 16.9 L-67.6 15.9 L-66.6 15.6 L-65.6 16.6 L-64.6 15.6 L-63.6 15.3 L-62.6 16.2 L-54.6 6.0 L-53.6 5.5 L-52.6 5.6 L-51.6 4.8 L-50.6 4.7 L-49.6 3.8 L-48.6 4.0 L-47.6 4.0 L-46.6 3.2 L-45.6 3.1 L-44.6 2.7 L-43.6 1.7 L-42.6 2.2 L-41.6 1.5 L-41.6 29.5 L-35.3 29.5 L-35.3 29.5 L-30.3 23.0 L-25.3 18.3 L-24.3 17.6 L-23.3 17.0 L-22.3 16.4 L-21.3 17.4 L-20.3 16.7 L-19.3 16.8 L-18.3 16.8 L-17.3 16.4 L-16.3 16.5 L-15.3 15.6 L-14.3 15.9 L-6.3 6.0 L-5.3 5.4 L-4.3 5.7 L-3.3 5.3 L-2.3 4.0 L-1.3 3.7 L-0.3 3.5 L0.7 4.1 L1.7 3.1 L2.7 3.0 L3.7 2.3 L4.7 2.2 L5.7 1.7 L6.7 1.5 L6.7 29.5 L13.0 29.5 L13.0 29.5 L18.0 23.0 L23.0 18.3 L24.0 17.3 L25.0 17.4 L26.0 17.2 L27.0 17.5 L28.0 17.0 L29.0 17.1 L30.0 16.8 L31.0 16.8 L32.0 16.1 L33.0 15.2 L34.0 16.0 L42.0 6.0 L43.0 6.1 L44.0 5.7 L45.0 4.9 L46.0 4.8 L47.0 3.8 L48.0 4.2 L49.0 3.6 L50.0 2.9 L51.0 2.3 L52.0 3.0 L53.0 2.8 L54.0 1.4 L55.0 1.5 L55.0 29.5 L61.3 29.5 L61.3 29.5 L66.3 23.0 L71.3 18.3 L72.3 17.9 L73.3 17.2 L74.3 16.6 L75.3 16.6 L76.3 17.1 L77.3 17.0 L78.3 15.7 L79.3 16.3 L80.3 15.3 L81.3 16.0 L82.3 15.3 L90.3 6.0 L91.3 6.0 L92.3 5.7 L93.3 4.8 L94.3 5.1 L95.3 4.0 L96.3 3.3 L97.3 3.6 L98.3 2.6 L99.3 2.5 L100.3 2.4 L101.3 2.3 L102.3 1.5 L103.3 1.5 L103.3 29.5 L109.6 29.5 L109.6 29.5 L114.6 23.0 L119.6 18.3 L120.6 16.9 L121.6 17.8 L122.6 16.8 L123.6 17.5 L124.6 17.3 L125.6 16.3 L126.6 16.2 L127.6 16.1 L128.6 16.1 L129.6 15.8 L130.6 15.6 L138.6 6.0 L139.6 5.6 L140.6 5.7 L141.6 4.8 L142.6 4.4 L143.6 4.4 L144.6 3.5 L145.6 3.3 L146.6 3.8 L147.6 2.9 L148.6 2.6 L149.6 1.6 L150.6 1.8 L151.6 1.5 L151.6 29.5 L157.9 29.5 L157.9 29.5 L162.9 23.0 L167.9 18.3 L168.9 17.6 L169.9 16.6 L170.9 17.3 L171.9 17.1 L172.9 16.1 L173.9 16.7 L174.9 16.3 L175.9 16.4 L176.9 15.7 L177.9 16.0 L178.9 15.8 L186.9 6.0 L187.9 4.9 L188.9 4.6 L189.9 5.1 L190.9 5.1 L191.9 3.9 L192.9 3.8 L193.9 3.6 L194.9 3.0 L195.9 2.7 L196.9 2.3 L197.9 2.0 L198.9 2.0 L199.9 1.5 L199.9 29.5 L206.2 29.5 L206.2 29.5 L211.2 23.0 L216.2 18.3 L217.2 17.2 L218.2 17.1 L219.2 17.5 L220.2 16.2 L221.2 16.8 L222.2 16.8 L223.2 16.0 L224.2 15.7 L225.2 16.3 L226.2 15.3 L227.2 15.1 L235.2 6.0 L236.2 5.4 L237.2 5.4 L238.2 4.4 L239.2 4.3 L240.2 4.0 L241.2 4.3 L242.2 3.4 L243.2 3.6 L244.2 2.5 L245.2 2.3 L246.2 2.4 L247.2 2.3 L248.2 1.5 L248.2 29.5 L254.5 29.5 L254.5 29.5 L259.5 23.0 L264.5 18.3 L265.5 17.4 L266.5 16.9 L267.5 16.6 L268.5 16.9 L269.5 16.3 L270.5 16.9 L271.5 16.8 L272.5 15.7 L273.5 15.6 L274.5 16.1 L275.5 15.7 L283.5 6.0 L284.5 5.9 L285.5 5.0 L286.5 4.4 L287.5 4.3 L288.5 4.5 L289.5 3.6 L290.5 3.3 L291.5 3.1 L292.5 2.8 L293.5 2.4 L294.5 2.7 L295.5 1.5 L296.5 1.5 L296.5 29.5 L302.8 29.5 L302.8 29.5 L307.8 23.0 L312.8 18.3 L313.8 16.8 L314.8 17.9 L315.8 17.6 L316.8 17.6 L317.8 16.6 L318.8 17.1 L319.8 16.9 L320.8 15.7 L321.8 16.2 L322.8 16.2 L323.8 15.7 L331.8 6.0 L332.8 5.5 L333.8 4.9 L334.8 4.6 L335.8 4.2 L336.8 3.7 L337.8 4.0 L338.8 3.3 L339.8 3.6 L340.8 2.3 L341.8 3.0 L342.8 2.4 L343.8 2.4 L344.8 1.5 L344.8 29.5 L351.1 29.5 L351.1 29.5 L356.1 23.0 L361.1 18.3 L362.1 18.1 L363.1 17.9 L364.1 17.2 L365.1 16.2 L366.1 17.0 L367.1 16.0 L368.1 16.0 L369.1 16.3 L370.1 15.9 L371.1 15.6 L372.1 16.1 L380.1 6.0 L381.1 5.6 L382.1 5.0 L383.1 4.5 L384.1 4.9 L385.1 4.2 L386.1 4.2 L387.1 3.3 L388.1 2.8 L389.1 2.9 L390.1 2.9 L391.1 1.8 L392.1 2.2 L393.1 1.5 L393.1 29.5 L399.4 29.5 L399.4 29.5 L404.4 23.0 L409.4 18.3 L410.4 18.1 L411.4 17.7 L412.4 17.6 L413.4 16.2 L414.4 16.9 L415.4 17.0 L416.4 15.7 L417.4 15.8 L418.4 15.6 L419.4 15.7 L420.4 15.4 L428.4 6.0 L429.4 5.5 L430.4 5.5 L431.4 4.2 L432.4 4.0 L433.4 3.7 L434.4 3.4 L435.4 3.0 L436.4 3.8 L437.4 3.3 L438.4 2.0 L439.4 2.2 L440.4 1.6 L441.4 1.5 L441.4 29.5 L447.7 29.5 L447.7 29.5 L452.7 23.0 L457.7 18.3 L458.7 17.2 L459.7 17.1 L460.7 17.3 L461.7 17.0 L462.7 16.5 L463.7 16.1 L464.7 16.1 L465.7 15.6 L466.7 16.0 L467.7 16.0 L468.7 15.3 L476.7 6.0 L477.7 5.0 L478.7 4.8 L479.7 4.7 L480.7 4.6 L481.7 4.5 L482.7 3.7 L483.7 3.9 L484.7 3.3 L485.7 2.8 L486.7 2.4 L487.7 2.2 L488.7 2.1 L489.7 1.5 L489.7 29.5 L496.0 29.5 L496.0 29.5 L501.0 23.0 L506.0 18.3 L507.0 17.4 L508.0 17.6 L509.0 17.0 L510.0 16.5 L511.0 16.8 L512.0 16.8 L513.0 15.7 L514.0 16.0 L515.0 15.8 L516.0 16.2 L517.0 16.1 L525.0 6.0 L526.0 5.3 L527.0 5.6 L528.0 5.2 L529.0 4.2 L530.0 4.1 L531.0 3.4 L532.0 3.9 L533.0 3.4 L534.0 3.3 L535.0 2.9 L536.0 2.4 L537.0 2.2 L538.0 1.5 L538.0 29.5 L544.3 29.5 L544.3 29.5 L549.3 23.0 L554.3 18.3 L555.3 17.6 L556.3 16.7 L557.3 17.2 L558.3 16.2 L559.3 16.2 L560.3 16.9 L561.3 15.7 L562.3 15.5 L563.3 15.3 L564.3 16.2 L565.3 15.1 L573.3 6.0 L574.3 4.9 L575.3 5.6 L576.3 4.4 L577.3 4.9 L578.3 4.4 L579.3 4.3 L580.3 4.1 L581.3 3.3 L582.3 3.2 L583.3 2.0 L584.3 2.5 L585.3 1.9 L586.3 1.5 L586.3 29.5 L592.6 29.5 L592.6 29.5 L597.6 23.0 L602.6 18.3 L603.6 17.8 L604.6 16.7 L605.6 17.4 L606.6 17.5 L607.6 16.1 L608.6 16.3 L609.6 16.4 L610.6 16.6 L611.6 15.5 L612.6 15.3 L613.6 15.1 L621.6 6.0 L622.6 5.6 L623.6 5.5 L624.6 4.7 L625.6 4.4 L626.6 4.1 L627.6 3.7 L628.6 3.4 L629.6 2.7 L630.6 2.9 L631.6 3.1 L632.6 2.1 L633.6 2.2 L634.6 1.5 L634.6 29.5 L640.9 29.5 L640.9 29.5 L645.9 23.0 L650.9 18.3 L651.9 17.0 L652.9 17.6 L653.9 17.5 L654.9 17.1 L655.9 16.7 L656.9 16.5 L657.9 16.5 L658.9 16.7 L659.9 15.4 L660.9 15.1 L661.9 15.8 L669.9 6.0 L670.9 6.0 L671.9 5.2 L672.9 4.8 L673.9 4.8 L674.9 3.8 L675.9 3.6 L676.9 3.2 L677.9 3.3 L678.9 2.6 L679.9 2.2 L680.9 2.4 L681.9 2.4 L682.9 1.5 L682.9 29.5 L689.2 29.5 L689.2 29.5 L694.2 23.0 L699.2 18.3 L700.2 17.2 L701.2 17.6 L702.2 17.0 L703.2 17.4 L704.2 16.8 L705.2 16.2 L706.2 15.9 L707.2 15.4 L708.2 15.9 L709.2 15.5 L710.2 15.0 L718.2 6.0 L719.2 5.3 L720.2 5.0 L721.2 5.2 L722.2 4.1 L723.2 4.8 L724.2 3.8 L725.2 3.6 L726.2 3.2 L727.2 3.3 L728.2 2.9 L729.2 2.3 L730.2 1.8 L731.2 1.5 L731.2 29.5 L737.5 29.5 L737.5 29.5 L742.5 23.0 L747.5 18.3 L748.5 17.8 L749.5 17.8 L750.5 17.0 L751.5 17.2 L752.5 17.3 L753.5 16.5 L754.5 15.9 L755.5 15.7 L756.5 16.2 L757.5 15.9 L758.5 16.1 L766.5 6.0 L767.5 5.9 L768.5 4.9 L769.5 4.5 L770.5 4.2 L771.5 3.8 L772.5 4.1 L773.5 4.0 L774.5 3.7 L775.5 2.6 L776.5 3.0 L777.5 2.0 L778.5 1.8 L779.5 1.5 L779.5 29.5 L785.8 29.5 L785.8 29.5 L790.8 23.0 L795.8 18.3 L796.8 17.8 L797.8 16.7 L798.8 16.5 L799.8 17.4 L800.8 16.4 L801.8 16.3 L802.8 16.4 L803.8 16.3 L804.8 15.2 L805.8 15.5 L806.8 15.4 L814.8 6.0 L815.8 5.5 L816.8 4.8 L817.8 4.9 L818.8 5.1 L819.8 4.0 L820.8 3.9 L821.8 3.1 L822.8 2.9 L823.8 3.1 L824.8 2.1 L825.8 2.7 L826.8 2.4 L827.8 1.5 L827.8 29.5 L834.1 29.5 L834.1 29.5 L839.1 23.0 L844.1 18.3 L845.1 16.9 L846.1 17.9 L847.1 16.9 L848.1 17.3 L849.1 17.1 L850.1 16.2 L851.1 16.5 L852.1 16.3 L853.1 16.3 L854.1 15.4 L855.1 15.9 L863.1 6.0 L864.1 6.1 L865.1 5.4 L866.1 4.9 L867.1 4.0 L868.1 4.2 L869.1 3.7 L870.1 3.8 L871.1 3.4 L872.1 2.9 L873.1 2.1 L874.1 2.4 L875.1 2.0 L876.1 1.5 L876.1 29.5 L882.4 29.5 L882.4 29.5 L887.4 23.0 L892.4 18.3 L893.4 17.1 L894.4 17.8 L895.4 17.3 L896.4 16.4 L897.4 17.3 L898.4 16.0 L899.4 16.1 L900.4 16.4 L901.4 16.0 L902.4 15.8 L903.4 15.7 L911.4 6.0 L912.4 5.4 L913.4 4.9 L914.4 4.5 L915.4 4.0 L916.4 4.4 L917.4 4.2 L918.4 3.6 L919.4 3.5 L920.4 2.7 L921.4 2.2 L922.4 2.1 L923.4 2.3 L924.4 1.5 L924.4 29.5 L930.7 29.5" stroke="#2c4670" stroke-width="1.15"/><path d="M-83.6 29.5 L-83.6 0.8 L-41.6 0.8 L-41.6 29.5 L-35.3 29.5 L-35.3 0.8 L6.7 0.8 L6.7 29.5 L13.0 29.5 L13.0 0.8 L55.0 0.8 L55.0 29.5 L61.3 29.5 L61.3 0.8 L103.3 0.8 L103.3 29.5 L109.6 29.5 L109.6 0.8 L151.6 0.8 L151.6 29.5 L157.9 29.5 L157.9 0.8 L199.9 0.8 L199.9 29.5 L206.2 29.5 L206.2 0.8 L248.2 0.8 L248.2 29.5 L254.5 29.5 L254.5 0.8 L296.5 0.8 L296.5 29.5 L302.8 29.5 L302.8 0.8 L344.8 0.8 L344.8 29.5 L351.1 29.5 L351.1 0.8 L393.1 0.8 L393.1 29.5 L399.4 29.5 L399.4 0.8 L441.4 0.8 L441.4 29.5 L447.7 29.5 L447.7 0.8 L489.7 0.8 L489.7 29.5 L496.0 29.5 L496.0 0.8 L538.0 0.8 L538.0 29.5 L544.3 29.5 L544.3 0.8 L586.3 0.8 L586.3 29.5 L592.6 29.5 L592.6 0.8 L634.6 0.8 L634.6 29.5 L640.9 29.5 L640.9 0.8 L682.9 0.8 L682.9 29.5 L689.2 29.5 L689.2 0.8 L731.2 0.8 L731.2 29.5 L737.5 29.5 L737.5 0.8 L779.5 0.8 L779.5 29.5 L785.8 29.5 L785.8 0.8 L827.8 0.8 L827.8 29.5 L834.1 29.5 L834.1 0.8 L876.1 0.8 L876.1 29.5 L882.4 29.5 L882.4 0.8 L924.4 0.8 L924.4 29.5" stroke="#3c8a22" stroke-width="1.6"/><path d="M-83.6 29.5 L-78.6 17.0 L-62.6 17.8 L-57.6 2.5 L-41.6 29.5 L-35.3 29.5 L-35.3 29.5 L-30.3 17.0 L-14.3 17.8 L-9.3 2.5 L6.7 29.5 L13.0 29.5 L13.0 29.5 L18.0 17.0 L34.0 17.8 L39.0 2.5 L55.0 29.5 L61.3 29.5 L61.3 29.5 L66.3 17.0 L82.3 17.8 L87.3 2.5 L103.3 29.5 L109.6 29.5 L109.6 29.5 L114.6 17.0 L130.6 17.8 L135.6 2.5 L151.6 29.5 L157.9 29.5 L157.9 29.5 L162.9 17.0 L178.9 17.8 L183.9 2.5 L199.9 29.5 L206.2 29.5 L206.2 29.5 L211.2 17.0 L227.2 17.8 L232.2 2.5 L248.2 29.5 L254.5 29.5 L254.5 29.5 L259.5 17.0 L275.5 17.8 L280.5 2.5 L296.5 29.5 L302.8 29.5 L302.8 29.5 L307.8 17.0 L323.8 17.8 L328.8 2.5 L344.8 29.5 L351.1 29.5 L351.1 29.5 L356.1 17.0 L372.1 17.8 L377.1 2.5 L393.1 29.5 L399.4 29.5 L399.4 29.5 L404.4 17.0 L420.4 17.8 L425.4 2.5 L441.4 29.5 L447.7 29.5 L447.7 29.5 L452.7 17.0 L468.7 17.8 L473.7 2.5 L489.7 29.5 L496.0 29.5 L496.0 29.5 L501.0 17.0 L517.0 17.8 L522.0 2.5 L538.0 29.5 L544.3 29.5 L544.3 29.5 L549.3 17.0 L565.3 17.8 L570.3 2.5 L586.3 29.5 L592.6 29.5 L592.6 29.5 L597.6 17.0 L613.6 17.8 L618.6 2.5 L634.6 29.5 L640.9 29.5 L640.9 29.5 L645.9 17.0 L661.9 17.8 L666.9 2.5 L682.9 29.5 L689.2 29.5 L689.2 29.5 L694.2 17.0 L710.2 17.8 L715.2 2.5 L731.2 29.5 L737.5 29.5 L737.5 29.5 L742.5 17.0 L758.5 17.8 L763.5 2.5 L779.5 29.5 L785.8 29.5 L785.8 29.5 L790.8 17.0 L806.8 17.8 L811.8 2.5 L827.8 29.5 L834.1 29.5 L834.1 29.5 L839.1 17.0 L855.1 17.8 L860.1 2.5 L876.1 29.5 L882.4 29.5 L882.4 29.5 L887.4 17.0 L903.4 17.8 L908.4 2.5 L924.4 29.5 L930.7 29.5" stroke="#d2307a" stroke-width="1.2"/><path d="M-83.6 29.5 L-78.6 16.0 L-76.1 15.0 L-58.6 2.8 L-55.6 2.8 L-50.6 8.8 L-48.6 18.0 L-41.6 29.5 L-35.3 29.5 L-35.3 29.5 L-30.3 16.0 L-27.8 15.0 L-10.3 2.8 L-7.3 2.8 L-2.3 8.8 L-0.3 18.0 L6.7 29.5 L13.0 29.5 L13.0 29.5 L18.0 16.0 L20.5 15.0 L38.0 2.8 L41.0 2.8 L46.0 8.8 L48.0 18.0 L55.0 29.5 L61.3 29.5 L61.3 29.5 L66.3 16.0 L68.8 15.0 L86.3 2.8 L89.3 2.8 L94.3 8.8 L96.3 18.0 L103.3 29.5 L109.6 29.5 L109.6 29.5 L114.6 16.0 L117.1 15.0 L134.6 2.8 L137.6 2.8 L142.6 8.8 L144.6 18.0 L151.6 29.5 L157.9 29.5 L157.9 29.5 L162.9 16.0 L165.4 15.0 L182.9 2.8 L185.9 2.8 L190.9 8.8 L192.9 18.0 L199.9 29.5 L206.2 29.5 L206.2 29.5 L211.2 16.0 L213.7 15.0 L231.2 2.8 L234.2 2.8 L239.2 8.8 L241.2 18.0 L248.2 29.5 L254.5 29.5 L254.5 29.5 L259.5 16.0 L262.0 15.0 L279.5 2.8 L282.5 2.8 L287.5 8.8 L289.5 18.0 L296.5 29.5 L302.8 29.5 L302.8 29.5 L307.8 16.0 L310.3 15.0 L327.8 2.8 L330.8 2.8 L335.8 8.8 L337.8 18.0 L344.8 29.5 L351.1 29.5 L351.1 29.5 L356.1 16.0 L358.6 15.0 L376.1 2.8 L379.1 2.8 L384.1 8.8 L386.1 18.0 L393.1 29.5 L399.4 29.5 L399.4 29.5 L404.4 16.0 L406.9 15.0 L424.4 2.8 L427.4 2.8 L432.4 8.8 L434.4 18.0 L441.4 29.5 L447.7 29.5 L447.7 29.5 L452.7 16.0 L455.2 15.0 L472.7 2.8 L475.7 2.8 L480.7 8.8 L482.7 18.0 L489.7 29.5 L496.0 29.5 L496.0 29.5 L501.0 16.0 L503.5 15.0 L521.0 2.8 L524.0 2.8 L529.0 8.8 L531.0 18.0 L538.0 29.5 L544.3 29.5 L544.3 29.5 L549.3 16.0 L551.8 15.0 L569.3 2.8 L572.3 2.8 L577.3 8.8 L579.3 18.0 L586.3 29.5 L592.6 29.5 L592.6 29.5 L597.6 16.0 L600.1 15.0 L617.6 2.8 L620.6 2.8 L625.6 8.8 L627.6 18.0 L634.6 29.5 L640.9 29.5 L640.9 29.5 L645.9 16.0 L648.4 15.0 L665.9 2.8 L668.9 2.8 L673.9 8.8 L675.9 18.0 L682.9 29.5 L689.2 29.5 L689.2 29.5 L694.2 16.0 L696.7 15.0 L714.2 2.8 L717.2 2.8 L722.2 8.8 L724.2 18.0 L731.2 29.5 L737.5 29.5 L737.5 29.5 L742.5 16.0 L745.0 15.0 L762.5 2.8 L765.5 2.8 L770.5 8.8 L772.5 18.0 L779.5 29.5 L785.8 29.5 L785.8 29.5 L790.8 16.0 L793.3 15.0 L810.8 2.8 L813.8 2.8 L818.8 8.8 L820.8 18.0 L827.8 29.5 L834.1 29.5 L834.1 29.5 L839.1 16.0 L841.6 15.0 L859.1 2.8 L862.1 2.8 L867.1 8.8 L869.1 18.0 L876.1 29.5 L882.4 29.5 L882.4 29.5 L887.4 16.0 L889.9 15.0 L907.4 2.8 L910.4 2.8 L915.4 8.8 L917.4 18.0 L924.4 29.5 L930.7 29.5" stroke="#ff5a1e" stroke-width="1.3"/></g><path d="M0 30.5 H573.5" stroke="#e6e6e6" stroke-width="1.5"/><rect x="574" y="0.2" width="286.7" height="41.6" rx="2.5" fill="none" stroke="#333" stroke-width="1.4"/><path d="M574 30.2 H860.7" stroke="#444" stroke-width="1.2"/><rect x="573.5" y="6.8" width="3.5" height="18" fill="#1a1a1a"/><rect x="857.2" y="6.8" width="3.5" height="18" fill="#1a1a1a"/><path d="M716 33.5 V39.5 M718.8 33.5 V39.5" stroke="#777" stroke-width="1"/></svg>
<div class="abs" style="left:410px;top:743.5px;width:861.5px;height:2px;background:#8a8a8a"></div>
<div class="abs" style="left:465.0px;top:744px;width:1.3px;height:4px;background:#777"></div>
<div class="t" style="left:465.6px;top:750.0px;font-size:10px;color:#333;font-weight:normal;height:10px;line-height:10px;transform:translateX(-50%);">03 PM</div>
<div class="abs" style="left:572.6999999999999px;top:744px;width:1.3px;height:4px;background:#777"></div>
<div class="t" style="left:573.3px;top:750.0px;font-size:10px;color:#333;font-weight:normal;height:10px;line-height:10px;transform:translateX(-50%);">06 PM</div>
<div class="abs" style="left:680.4px;top:744px;width:1.3px;height:4px;background:#777"></div>
<div class="t" style="left:681px;top:750.0px;font-size:10px;color:#333;font-weight:normal;height:10px;line-height:10px;transform:translateX(-50%);">09 PM</div>
<div class="abs" style="left:788.1px;top:744px;width:1.3px;height:4px;background:#777"></div>
<div class="t" style="left:788.7px;top:750.0px;font-size:10px;color:#333;font-weight:normal;height:10px;line-height:10px;transform:translateX(-50%);">Tue, 22</div>
<div class="abs" style="left:895.8px;top:744px;width:1.3px;height:4px;background:#777"></div>
<div class="t" style="left:896.4px;top:750.0px;font-size:10px;color:#333;font-weight:normal;height:10px;line-height:10px;transform:translateX(-50%);">03 AM</div>
<div class="abs" style="left:1003.4999999999999px;top:744px;width:1.3px;height:4px;background:#777"></div>
<div class="t" style="left:1004.0999999999999px;top:750.0px;font-size:10px;color:#333;font-weight:normal;height:10px;line-height:10px;transform:translateX(-50%);">06 AM</div>
<div class="abs" style="left:1111.2px;top:744px;width:1.3px;height:4px;background:#777"></div>
<div class="t" style="left:1111.8px;top:750.0px;font-size:10px;color:#333;font-weight:normal;height:10px;line-height:10px;transform:translateX(-50%);">09 AM</div>
<div class="abs" style="left:1218.9px;top:744px;width:1.3px;height:4px;background:#777"></div>
<div class="t" style="left:1219.5px;top:750.0px;font-size:10px;color:#333;font-weight:normal;height:10px;line-height:10px;transform:translateX(-50%);">12 PM</div>
<div class="abs" style="left:410px;top:744px;width:1.3px;height:4px;background:#777"></div><div class="abs" style="left:1270.5px;top:744px;width:1.3px;height:4px;background:#777"></div>
<div class="btn" style="left:410px;top:768.7px;width:243.3px;height:22.6px"></div>
<div class="abs" style="left:411px;top:769.7px;width:32.3px;height:20.6px;background:#eef3f8"></div>
<div class="t" style="left:426.65px;top:773.5px;font-size:13px;color:#1f5fae;font-weight:normal;height:13px;line-height:13px;transform:translateX(-50%);">1D</div>
<div class="abs" style="left:443.3px;top:769px;width:1px;height:22px;background:#dcdcdc"></div>
<div class="t" style="left:461.65px;top:773.5px;font-size:13px;color:#333;font-weight:normal;height:13px;line-height:13px;transform:translateX(-50%);">1W</div>
<div class="abs" style="left:480px;top:769px;width:1px;height:22px;background:#dcdcdc"></div>
<div class="t" style="left:497.65px;top:773.5px;font-size:13px;color:#333;font-weight:normal;height:13px;line-height:13px;transform:translateX(-50%);">1M</div>
<div class="abs" style="left:515.3px;top:769px;width:1px;height:22px;background:#dcdcdc"></div>
<div class="t" style="left:532.65px;top:773.5px;font-size:13px;color:#333;font-weight:normal;height:13px;line-height:13px;transform:translateX(-50%);">3M</div>
<div class="abs" style="left:550px;top:769px;width:1px;height:22px;background:#dcdcdc"></div>
<div class="t" style="left:567.35px;top:773.5px;font-size:13px;color:#333;font-weight:normal;height:13px;line-height:13px;transform:translateX(-50%);">6M</div>
<div class="abs" style="left:584.7px;top:769px;width:1px;height:22px;background:#dcdcdc"></div>
<div class="t" style="left:600.7px;top:773.5px;font-size:13px;color:#333;font-weight:normal;height:13px;line-height:13px;transform:translateX(-50%);">1Y</div>
<div class="abs" style="left:616.7px;top:769px;width:1px;height:22px;background:#dcdcdc"></div>
<div class="t" style="left:635.0px;top:773.5px;font-size:13px;color:#333;font-weight:normal;height:13px;line-height:13px;transform:translateX(-50%);">ALL</div>
<div class="btn" style="left:671.3px;top:768.7px;width:102px;height:22.6px"></div>
<div class="abs" style="left:751.3px;top:769px;width:1px;height:22px;background:#dcdcdc"></div>
<div class="t" style="left:705px;top:774.0px;font-size:12px;color:#333;font-weight:normal;height:12px;line-height:12px;transform:translateX(-50%);">CUSTOM</div>
<div class="abs" style="left:737px;top:777.5px;width:0;height:0;border-left:4px solid transparent;border-right:4px solid transparent;border-bottom:4px solid #888"></div>
<svg class="abs" style="left:756px;top:774px" width="12" height="11" viewBox="0 0 12 11" fill="none" stroke="#666" stroke-width="1">
<rect x="0.5" y="0.5" width="11" height="10"/><path d="M3 3 V5 M3 3 H5 M9 8 V6 M9 8 H7"/></svg>
<svg class="abs" style="left:0;top:0" width="1280" height="800"><rect x="362.1" y="91" width="916.4" height="569" fill="none" stroke="#6f00fb" stroke-width="2" stroke-dasharray="12 4.33" stroke-dashoffset="2.33"/></svg>
<div class="abs" style="left:336.8px;top:64px;width:135px;height:32px;background:#6f00fb;border-radius:5px"></div>
<div class="t" style="left:404px;top:72.8px;font-size:15.5px;color:#fff;font-weight:bold;height:15.5px;line-height:15.5px;transform:translateX(-50%);letter-spacing:-0.4px">Scatter plot</div>
<div class="abs" style="left:472.4px;top:64.3px;width:254px;height:31.7px;background:#fff;border:2px solid #6f00fb;border-radius:5px"></div>
<div class="t" style="left:599.4px;top:72.8px;font-size:15.5px;color:#6f00fb;font-weight:bold;height:15.5px;line-height:15.5px;transform:translateX(-50%);letter-spacing:-0.53px">Single scatter (no histograms)</div>
</div>
</body></html>
